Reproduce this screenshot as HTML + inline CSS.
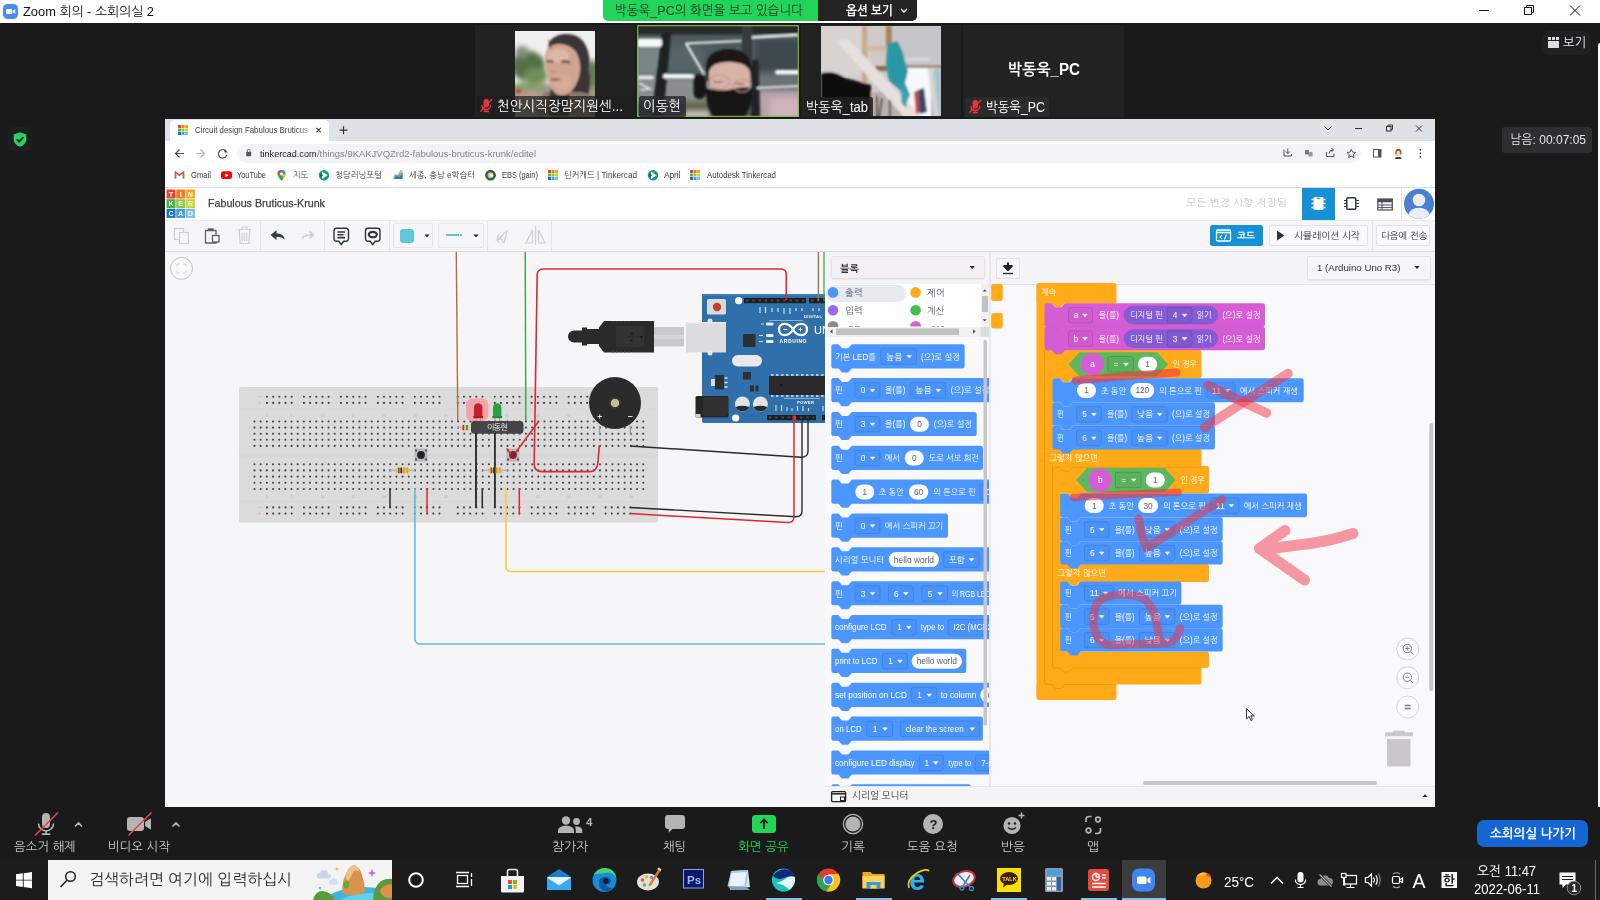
<!DOCTYPE html>
<html lang="ko"><head>
<meta charset="utf-8">
<title>Zoom 회의 - 소회의실 2</title>
<style>
*{box-sizing:border-box;margin:0;padding:0}
html,body{width:1600px;height:900px;overflow:hidden;background:#1a1a1a}
body{font-family:"Liberation Sans","NanumGothic","Noto Sans CJK KR",sans-serif;font-size:12px;color:#fff;position:relative}
.a{position:absolute}
.t{position:absolute;white-space:nowrap;line-height:1}
svg{position:absolute;overflow:visible}
#titlebar{left:0;top:0;width:1600px;height:23px;background:#fff}
#banner{left:603px;top:0;width:215px;height:21px;background:#23d45a;border-radius:0 0 0 5px}
#opts{left:818px;top:0;width:99px;height:21px;background:#242424;border-radius:0 0 5px 0}
#share{left:165px;top:119px;width:1270px;height:688px;background:#f6f6f8;overflow:hidden}
#zbar{left:0;top:807px;width:1600px;height:52px;background:#1a1a1a}
#taskbar{left:0;top:859px;width:1600px;height:41px;background:#1c1c1c}
.zl{position:absolute;white-space:nowrap;line-height:1;font-size:12.5px;color:#c8c8c8;top:841px}
.lab{position:absolute;background:rgba(30,30,30,.7);height:21px;border-radius:2px}
.lab span{position:absolute;white-space:nowrap;line-height:1;font-size:14px;color:#fff;top:3px}

#sh{position:absolute;left:-165px;top:-119px;width:1600px;height:900px;font-size:9px;color:#333;filter:blur(.35px)}
.bm{position:absolute;white-space:nowrap;line-height:1;font-size:8.600px;color:#3c4043;top:171px}
</style>
</head>
<body>
<div id="root" style="position:absolute;left:0;top:0;width:1600px;height:900px;will-change:transform">
<!-- TITLEBAR -->
<div id="titlebar" class="a">
  <svg style="left:3px;top:4px" width="15" height="15" viewBox="0 0 15 15"><rect x="0" y="0" width="15" height="15" rx="4.5" fill="#4a8cf7"></rect><rect x="3" y="5" width="6.2" height="5" rx="1.3" fill="#fff"></rect><path d="M9.8 6.8 L12.2 5.3 V9.7 L9.8 8.2Z" fill="#fff"></path></svg>
  <span class="t" style="left: 23px; top: 5px; font-size: 13px; color: rgb(17, 17, 17); transform-origin: left top; transform: scaleX(0.988);">Zoom 회의 - 소회의실 2</span>
  <svg style="left:1478px;top:4px" width="110" height="14" viewBox="0 0 110 14" fill="none" stroke="#111" stroke-width="1"><path d="M1 6.5H11"></path><path d="M46.5 3.5h7v7h-7z"></path><path d="M48.5 3.5v-2h7v7h-2"></path><path d="M92 1.5l10 10M102 1.5l-10 10"></path></svg>
</div>
<div id="banner" class="a"><span class="t" style="left: 12px; top: 3.5px; font-size: 13.5px; color: rgb(28, 58, 36); transform-origin: left top; transform: scaleX(0.928);">박동욱_PC의 화면을 보고 있습니다</span></div>
<div id="opts" class="a"><span class="t" style="left: 28px; top: 4px; font-size: 13px; font-weight: bold; color: rgb(255, 255, 255); transform-origin: left top; transform: scaleX(0.895);">옵션 보기</span>
  <svg style="left:82px;top:8px" width="8" height="6" viewBox="0 0 8 6" fill="none" stroke="#fff" stroke-width="1.4"><path d="M1 1l3 3 3-3"></path></svg></div>

<!-- right side -->
<div class="a" style="left:1598px;top:43px;width:2px;height:773px;background:#fff;border-radius:2px 0 0 0"></div>
<div class="a" style="left:1542px;top:31px;width:49px;height:24px;background:#202022;border-radius:8px">
  <svg style="left:6px;top:6px" width="11" height="11" viewBox="0 0 11 11"><rect x="0" y="0" width="3" height="3" fill="#ddd"></rect><rect x="4" y="0" width="3" height="3" fill="#ddd"></rect><rect x="8" y="0" width="3" height="3" fill="#ddd"></rect><rect x="0" y="4" width="11" height="7" fill="#ddd"></rect></svg>
  <span class="t" style="left: 21px; top: 5px; font-size: 13px; color: rgb(238, 238, 238); transform-origin: left top; transform: scaleX(0.941);">보기</span>
</div>
<div class="a" style="left:1502px;top:127px;width:90px;height:26px;background:#2e2e30;border-radius:3px">
  <span class="t" style="left: 8px; top: 6px; font-size: 13px; color: rgb(230, 230, 230); transform-origin: left top; transform: scaleX(0.924);">남음: 00:07:05</span>
</div>
<!-- shield -->
<div class="a" style="left:8px;top:127px;width:24px;height:24px;background:#1f1f1f;border-radius:6px">
  <svg style="left:5px;top:5px" width="14" height="15" viewBox="0 0 14 15"><path d="M7 0.3 L13.3 2.6 V7 C13.3 11 10.5 13.6 7 14.8 C3.5 13.6 0.7 11 0.7 7 V2.6Z" fill="#25d366"></path><path d="M3.8 7.3 L6.2 9.7 L10.4 5.2" fill="none" stroke="#1a1a1a" stroke-width="1.7"></path></svg>
</div>

<!-- THUMBS -->
<div id="thumbs">
<svg style="left:0;top:0" width="0" height="0"><defs>
 <filter id="b1" x="-20%" y="-20%" width="140%" height="140%"><feGaussianBlur stdDeviation="1.200"></feGaussianBlur></filter>
 <filter id="b2" x="-20%" y="-20%" width="140%" height="140%"><feGaussianBlur stdDeviation="2.500"></feGaussianBlur></filter>
 <filter id="b05" x="-20%" y="-20%" width="140%" height="140%"><feGaussianBlur stdDeviation="0.600"></feGaussianBlur></filter>
</defs></svg>
<div class="a" id="th1" style="left:475px;top:25px;width:160px;height:92px;background:#222;overflow:hidden">
 <svg style="left:40px;top:6px;overflow:hidden" width="80" height="86" viewBox="515 31 80 86">
  <rect x="515" y="31" width="80" height="86" fill="#eff0ef"></rect>
  <g filter="url(#b2)">
   <ellipse cx="528" cy="66" rx="17" ry="15" fill="#52704a"></ellipse>
   <ellipse cx="522" cy="52" rx="7" ry="6" fill="#7d927a"></ellipse>
   <ellipse cx="536" cy="76" rx="12" ry="8" fill="#6f8f5a"></ellipse>
   <rect x="510" y="84" width="90" height="36" fill="#98987e"></rect>
   <ellipse cx="528" cy="86" rx="16" ry="4" fill="#82a068"></ellipse>
   <ellipse cx="593" cy="74" rx="7" ry="14" fill="#5f7d4e"></ellipse>
   <ellipse cx="530" cy="96" rx="14" ry="5" fill="#b89c94"></ellipse>
  </g>
  <g filter="url(#b1)">
   <path d="M548 52q-1-16 16-18q16-1 22 12q5 10 3 24q3 12-2 30h-16l2-26z" fill="#3b3438"></path>
   <path d="M546 92q-6 4-10 24h64v-14q-8-8-20-10z" fill="#8e7a72"></path>
   <path d="M552 88q-5 8-3 28h20v-26z" fill="#3a3034"></path>
   <path d="M545 60q-1-14 12-16q12-1 19 8q5 8 4 20q-2 14-12 22q-8 4-14-2q-8-10-9-32z" fill="#cfa692"></path>
   <ellipse cx="558" cy="56" rx="11" ry="7" fill="#dcb8a6"></ellipse>
   <ellipse cx="562" cy="82" rx="9" ry="8" fill="#d4ac98"></ellipse>
   <path d="M546.500 62q3.500-2 7 0M561 62.500q4.500-2.500 9 .5" stroke="#4a3830" stroke-width="2" fill="none"></path>
   <ellipse cx="555.500" cy="79.500" rx="5" ry="1.700" fill="#a86862"></ellipse>
   <path d="M551 71q2 2 5 1" stroke="#b08878" stroke-width="1.200" fill="none"></path>
   <ellipse cx="518.500" cy="91" rx="2.500" ry="2.500" fill="#c8483e"></ellipse>
   <path d="M549 40l2 8" stroke="#4a4040" stroke-width="1.200"></path>
  </g>
 </svg>
 <div class="lab" style="left:1px;top:71px;width:158px"><span style="left: 21px; transform-origin: left top; transform: scaleX(0.968);">천안시직장맘지원센...</span></div>
 <svg style="left:4px;top:73px" width="14" height="15" viewBox="0 0 14 15"><rect x="4.500" y="1" width="5.500" height="8.500" rx="2.700" fill="#e0383e"></rect><path d="M2.800 7 a4.500 4.500 0 0 0 9 0 M7.200 11.500v2 M4.500 13.500h5.500" fill="none" stroke="#e0383e" stroke-width="1.300"></path><path d="M1.500 13.500 L13 1" stroke="#e0383e" stroke-width="1.300"></path></svg>
</div>
<div class="a" id="th2" style="left:637px;top:25px;width:162px;height:92px;background:#525c5f;overflow:hidden">
 <svg style="left:0;top:0;overflow:hidden" width="162" height="92" viewBox="637 25 162 92">
  <rect x="637" y="25" width="162" height="92" fill="#4d5a5e"></rect>
  <g filter="url(#b2)">
   <rect x="632" y="44" width="30" height="32" fill="#7a8588"></rect>
   <rect x="668" y="46" width="36" height="26" fill="#566468"></rect>
   <rect x="632" y="78" width="78" height="24" fill="#8a8e8e"></rect>
   <rect x="756" y="40" width="48" height="30" fill="#3e4a4e"></rect>
   <rect x="756" y="74" width="48" height="14" fill="#6a7276"></rect>
   <rect x="758" y="90" width="46" height="30" fill="#b9a2aa"></rect>
   <rect x="770" y="98" width="34" height="22" fill="#ceb2bc"></rect>
   <rect x="684" y="101" width="24" height="9" fill="#696746"></rect>
   <rect x="684" y="111" width="26" height="8" fill="#c8c4c0"></rect>
  </g>
  <g filter="url(#b1)">
   <rect x="637" y="25" width="162" height="9.500" fill="#272b2c"></rect>
   <path d="M662 33h9l-8 86h-12z" fill="#1c2021"></path>
   <rect x="742" y="25" width="10" height="36" fill="#363a3c"></rect>
   <path d="M752 60h6.500l1.500 58h-9z" fill="#202425"></path>
   <rect x="637" y="38.500" width="25" height="8.500" rx="3" fill="#f6f8f8"></rect>
   <path d="M685.500 43.500L741 41" stroke="#eef2f2" stroke-width="2.200" fill="none"></path>
   <path d="M752 37.500L798 35" stroke="#eef2f2" stroke-width="2.600" fill="none"></path>
   <path d="M686 43.500L704 74" stroke="#f2f6f6" stroke-width="2.200" fill="none"></path>
   <rect x="663" y="74" width="31" height="4.500" rx="2.200" fill="#f4f8f8"></rect>
   <rect x="637" y="75.500" width="17" height="4" rx="2" fill="#e4eaea"></rect>
   <rect x="775" y="70" width="25" height="4.500" rx="2.200" fill="#f4f8f8"></rect>
   <path d="M757 88L799 86" stroke="#e2e8e8" stroke-width="2" fill="none"></path>
   <path d="M639 83l11 6-10 1" stroke="#eaf0f0" stroke-width="1.500" fill="none"></path>
   <path d="M706 70q-1-20 22-21q22 0 24 20l-1 12h-44z" fill="#1b1919"></path>
   <path d="M709 72q2-10 20-10q18 0 21 10l1 16q-20 6-42 0z" fill="#d8b2a6"></path>
   <rect x="693.500" y="74" width="12.500" height="25" rx="6" fill="#131313"></rect>
   <path d="M706 88q10 4 22 2q14-4 24-2q2 16-8 30h-30q-9-12-8-30z" fill="#161616"></path>
   <ellipse cx="719.500" cy="82" rx="10" ry="7" fill="none" stroke="#c09888" stroke-width="1.100"></ellipse>
   <ellipse cx="742" cy="85.500" rx="8.500" ry="6.500" fill="none" stroke="#c09888" stroke-width="1.100"></ellipse>
   <path d="M713 81.500q5 1.500 10 0M735 83q5 1.500 9 .5" stroke="#6a4a40" stroke-width="1.100" fill="none"></path>
  </g>
  <rect x="637.700" y="25.700" width="160.600" height="90.600" fill="none" stroke="#88ba3c" stroke-width="1.100"></rect>
 </svg>
 <div class="lab" style="left:2px;top:71px;width:47px;background:rgba(40,40,44,.8)"><span style="left: 4px; transform-origin: left top; transform: scaleX(0.962);">이동현</span></div>
</div>
<div class="a" id="th3" style="left:801px;top:25px;width:160px;height:92px;background:#222;overflow:hidden">
 <svg style="left:20px;top:1px;overflow:hidden" width="120" height="90" viewBox="821 26 120 90">
  <rect x="821" y="26" width="120" height="90" fill="#cfc9c8"></rect>
  <g filter="url(#b1)">
   <rect x="890" y="26" width="52" height="44" fill="#c6c6ca"></rect>
   <rect x="821" y="26" width="45" height="50" fill="#d8d2d0"></rect>
   <rect x="900" y="68" width="34" height="50" fill="#f6f8fa"></rect>
   <rect x="931" y="70" width="11" height="48" fill="#a9c3cc"></rect>
   <path d="M928 68 h5 l6 50 h-5z" fill="#d8d4d0"></path>
   <rect x="896" y="58" width="34" height="3" fill="#d8d8d8"></rect>
   <rect x="896" y="65" width="46" height="3" fill="#a08a78"></rect>
   <rect x="862" y="26" width="5" height="60" fill="#c8aa88"></rect>
   <rect x="886" y="26" width="6" height="22" fill="#a88450"></rect>
   <rect x="866" y="46" width="24" height="5" fill="#d4b8a0"></rect>
   <rect x="875" y="66" width="14" height="5" fill="#8a6a58"></rect>
   <rect x="871" y="92" width="32" height="26" fill="#b9b0ae"></rect>
   <path d="M836 41l12-2 76 80h-18z" fill="#e6e0de"></path>
   <path d="M887 44l10-3q6 8 8 20l3 10-3 12 5 12-3 6-8-12-10-8-3-16z" fill="#2a97a6"></path>
   <path d="M902 84l6 12-2 12-5-6z" fill="#38a6b4"></path>
   <path d="M821 73q14-3 24 5l26 7v33h-50z" fill="#070707"></path>
   <path d="M877 96v22M882 98l-3 20M890 100v18" stroke="#2a2424" stroke-width="1.600" fill="none"></path>
   <path d="M914 92l4-2 3 22-5 2z" fill="#c04858"></path>
   <path d="M918 90l6-2 3 24-7 2z" fill="#3a4868"></path>
  </g>
 </svg>
 <div class="lab" style="left:0;top:72px;width:72px;background:rgba(34,34,34,.86)"><span style="left: 5px; transform-origin: left top; transform: scaleX(0.929);">박동욱_tab</span></div>
</div>
<div class="a" id="th4" style="left:963px;top:25px;width:161px;height:92px;background:#222;overflow:hidden">
 <span class="t" style="left: 45px; top: 37px; font-size: 16px; font-weight: bold; color: rgb(255, 255, 255); transform-origin: left top; transform: scaleX(0.944);">박동욱_PC</span>
 <div class="lab" style="left:2px;top:72px;width:84px;background:#2b2b2b"><span style="left: 21px; transform-origin: left top; transform: scaleX(0.884);">박동욱_PC</span></div>
 <svg style="left:5px;top:74px" width="14" height="15" viewBox="0 0 14 15"><rect x="4.500" y="1" width="5.500" height="8.500" rx="2.700" fill="#e0383e"></rect><path d="M2.800 7 a4.500 4.500 0 0 0 9 0 M7.200 11.500v2 M4.500 13.500h5.500" fill="none" stroke="#e0383e" stroke-width="1.300"></path><path d="M1.500 13.500 L13 1" stroke="#e0383e" stroke-width="1.300"></path></svg>
</div>
</div>

<!-- SHARED SCREEN -->
<div id="share" class="a"><div id="sh">
<!-- chrome tab strip -->
<div class="a" style="left:165px;top:119px;width:1270px;height:23px;background:#dee1e6"></div>
<div class="a" style="left:170px;top:120px;width:159px;height:22px;background:#fff;border-radius:5px 5px 0 0"></div>
<div class="a" style="left:165px;top:141px;width:1270px;height:46px;background:#fff"></div>
<div class="a" style="left:237px;top:144px;width:1124px;height:19px;background:#f1f3f4;border-radius:10px"></div>
<div class="a" style="left:165px;top:187px;width:1270px;height:1px;background:#dcdcdc"></div>
<svg style="left:165px;top:119px" width="1270" height="70" viewBox="165 119 1270 70" font-family="Liberation Sans, sans-serif">
 <!-- favicon -->
 <g id="tkfav"><rect x="178" y="125" width="3" height="3" fill="#e8452c"></rect><rect x="181.500" y="125" width="3" height="3" fill="#f47b20"></rect><rect x="185" y="125" width="3" height="3" fill="#f8a51b"></rect><rect x="178" y="128.500" width="3" height="3" fill="#4cb848"></rect><rect x="181.500" y="128.500" width="3" height="3" fill="#8dc63f"></rect><rect x="185" y="128.500" width="3" height="3" fill="#c6d92e"></rect><rect x="178" y="132" width="3" height="3" fill="#1c75bc"></rect><rect x="181.500" y="132" width="3" height="3" fill="#42a5e0"></rect><rect x="185" y="132" width="3" height="3" fill="#7ac0e8"></rect></g>
 <use href="#tkfav" x="370" y="45"></use>
 <use href="#tkfav" x="512" y="45"></use>
 <path d="M316.300 127.800l4.600 4.600M320.900 127.800l-4.600 4.600" stroke="#444" stroke-width="1.100"></path>
 <path d="M339.500 130.200h8M343.500 126.200v8" stroke="#333" stroke-width="1.200"></path>
 <!-- window controls -->
 <g fill="none" stroke="#333" stroke-width="1"><path d="M1324.500 126.500l3.500 3.500 3.500-3.500"></path><path d="M1355 128.500h7"></path><rect x="1386.500" y="126.500" width="4.500" height="4.500"></rect><path d="M1388 126.500v-1.500h4.500v4.500h-1.500"></path><path d="M1416 125.500l6 6M1422 125.500l-6 6"></path></g>
 <!-- nav -->
 <g fill="none" stroke="#4a4a4a" stroke-width="1.200"><path d="M184 153.500h-8.500M179.500 149.500l-4 4 4 4"></path><path d="M226.300 151.500a4.300 4.300 0 1 0 .5 3.500"></path></g>
 <path d="M224.500 149v3.500h3.500z" fill="#4a4a4a" transform="rotate(8 226 151)"></path>
 <g fill="none" stroke="#b8b8b8" stroke-width="1.200"><path d="M196 153.500h8.500M200.500 149.500l4 4-4 4"></path></g>
 <rect x="246.200" y="152" width="5" height="4.200" rx=".6" fill="#555"></rect><path d="M247.300 152v-1.300a1.400 1.400 0 0 1 2.800 0v1.300" fill="none" stroke="#555" stroke-width=".9"></path>
 <!-- omnibox right icons -->
 <g fill="none" stroke="#555" stroke-width="1"><path d="M1284 149.500v6.500h7.500v-2M1287.800 148.500v5M1285.800 151.500l2 2 2-2"></path><rect x="1305" y="150" width="4" height="4.500" fill="#777" stroke="none"></rect><rect x="1308.500" y="152" width="4" height="4.500" fill="#999" stroke="none"></rect><path d="M1326.500 152v4.500h7.500v-3M1329 153.500q.5-3.500 4-3.500M1331.500 148l2 2-2 2"></path><path d="M1351.300 149.300l1.300 2.800 3 .4-2.200 2.100.6 3-2.700-1.500-2.700 1.500.6-3-2.200-2.100 3-.4z"></path><rect x="1373.500" y="149.500" width="7.500" height="7.500"></rect></g>
 <rect x="1378" y="149.500" width="3" height="7.500" fill="#555"></rect>
 <circle cx="1398.300" cy="152.500" r="3.600" fill="#f5d0b0"></circle><path d="M1395.500 151q3-4.500 5.800 0v3.500h-1v-3q-1.900-1.500-3.800 0v3h-1z" fill="#7a4a2a"></path><path d="M1395.800 157h5l.8 2h-6.600z" fill="#333"></path><circle cx="1398.300" cy="152.500" r="5.200" fill="none" stroke="#f7c9a0" stroke-width=".6" stroke-dasharray="1 1.500"></circle>
 <circle cx="1420.300" cy="149.800" r=".9" fill="#444"></circle><circle cx="1420.300" cy="153.300" r=".9" fill="#444"></circle><circle cx="1420.300" cy="156.800" r=".9" fill="#444"></circle>
 <!-- bookmark icons -->
 <path d="M175.500 178.500v-6.500l4 3.200 4-3.200v6.500" fill="none" stroke="#e84a3c" stroke-width="1.500"></path><path d="M175.500 178.500v-5" stroke="#4a86e8" stroke-width="1.500"></path><path d="M183.500 178.500v-5" stroke="#3aa757" stroke-width="1.500"></path>
 <rect x="221" y="171.300" width="11" height="7.700" rx="2.200" fill="#f00"></rect><path d="M225.300 173.200l3.400 2-3.400 2z" fill="#fff"></path>
 <path d="M281.500 181q-4-4.500-4-7a4 4 0 0 1 8 0q0 2.500-4 7z" fill="#34a853"></path><path d="M277.500 174a4 4 0 0 1 4-4v4z" fill="#ea4335"></path><path d="M281.500 170a4 4 0 0 1 4 4h-4z" fill="#4285f4"></path><path d="M281.500 174h4q0 2-2 4.500z" fill="#fbbc04"></path><circle cx="281.500" cy="174" r="1.400" fill="#fff"></circle>
 <g id="cdi"><circle cx="324" cy="175.200" r="5.200" fill="#1a9a8a"></circle><path d="M322 171.500l5.500 3.700-5.500 3.700z" fill="#fff"></path><path d="M320 173.500l3.500 1.700-3.500 1.700z" fill="#0e6a5e"></path></g>
 <use href="#cdi" x="329" y="0"></use>
 <path d="M393 179l2-5 3 1 2-4 3 2v6z" fill="#6aa8c8"></path><path d="M395 179l1-3 3 1 3-2v4z" fill="#2a7a9a"></path><circle cx="401" cy="171.500" r="1.500" fill="#f0c040"></circle>
 <circle cx="490.500" cy="175.200" r="5.400" fill="#1a5a7a"></circle><circle cx="490.500" cy="175.200" r="3" fill="#f2c230"></circle><circle cx="491.500" cy="175.200" r="1.500" fill="#fff"></circle>
</svg>
<span class="t" style="left: 194.5px; top: 125.5px; font-size: 8.7px; color: rgb(60, 64, 67); transform-origin: left top; transform: scaleX(0.907);">Circuit design Fabulous Bruticus</span>
<div class="a" style="left:300px;top:122px;width:12px;height:18px;background:linear-gradient(90deg,rgba(255,255,255,0),#fff)"></div>
<span class="t" style="left: 259.5px; top: 149.7px; font-size: 8.8px; color: rgb(32, 33, 36); transform-origin: left top; transform: scaleX(1.032);">tinkercad.com</span>
<span class="t" style="left: 316.5px; top: 149.7px; font-size: 8.8px; color: rgb(128, 134, 139); transform-origin: left top; transform: scaleX(1.074);">/things/9KAKJVQZrd2-fabulous-bruticus-krunk/editel</span>
<span class="bm" style="left: 190.5px; transform-origin: left top; transform: scaleX(0.891);">Gmail</span>
<span class="bm" style="left: 237px; transform-origin: left top; transform: scaleX(0.858);">YouTube</span>
<span class="bm" style="left: 292.5px; transform-origin: left top; transform: scaleX(0.928);">지도</span>
<span class="bm" style="left: 335px; transform-origin: left top; transform: scaleX(0.969);">청담러닝포털</span>
<span class="bm" style="left: 408.5px; transform-origin: left top; transform: scaleX(0.964);">세종, 충남 e학습터</span>
<span class="bm" style="left: 501.5px; transform-origin: left top; transform: scaleX(0.866);">EBS (gain)</span>
<span class="bm" style="left: 564px; transform-origin: left top; transform: scaleX(0.951);">틴커캐드 | Tinkercad</span>
<span class="bm" style="left: 664px; transform-origin: left top; transform: scaleX(0.959);">April</span>
<span class="bm" style="left: 706.5px; transform-origin: left top; transform: scaleX(0.914);">Autodesk Tinkercad</span>
<!-- tinkercad header -->
<div class="a" style="left:165px;top:188px;width:1270px;height:32px;background:#fff"></div>
<div class="a" style="left:165px;top:220px;width:1270px;height:32px;background:#f6f6f8;border-top:1px solid #ececee;border-bottom:1px solid #dcdce0"></div>
<div class="a" style="left:1302px;top:188px;width:33px;height:32px;background:#1592d6"></div>
<div class="a" style="left:1401px;top:189px;width:1px;height:30px;background:#e4e4e4"></div>
<div class="a" style="left:1210px;top:225px;width:53px;height:21px;background:#1592d6;border-radius:2.500px"></div>
<div class="a" style="left:1269px;top:225px;width:99px;height:21px;background:#f9f9fb;border:1px solid #e3e3e6;border-radius:2px"></div>
<div class="a" style="left:1376px;top:225px;width:54px;height:21px;background:#f9f9fb;border:1px solid #e3e3e6;border-radius:2px"></div>
<div class="a" style="left:393px;top:223px;width:40px;height:25px;border:1px solid #e6e6e9;border-radius:2px"></div>
<div class="a" style="left:438px;top:223px;width:46px;height:25px;border:1px solid #e6e6e9;border-radius:2px"></div>
<div class="a" style="left:400px;top:229px;width:14px;height:14px;background:#5ec8d8;border-radius:3px"></div>
<div class="a" style="left:446px;top:234px;width:13px;height:2px;background:#5ec8d8"></div><div class="a" style="left:460px;top:234px;width:2px;height:2px;background:#5ec8d8"></div>
<svg style="left:165px;top:188px" width="1270" height="64" viewBox="165 188 1270 64" font-family="Liberation Sans, sans-serif">
 <!-- logo -->
 <g font-size="7.200" font-weight="bold" fill="#fff" text-anchor="middle">
  <rect x="166.500" y="189.500" width="9" height="9" fill="#e8452c"></rect><rect x="176.200" y="189.500" width="9" height="9" fill="#f47b20"></rect><rect x="185.900" y="189.500" width="9" height="9" fill="#f9a21a"></rect>
  <rect x="166.500" y="199.200" width="9" height="9" fill="#44b549"></rect><rect x="176.200" y="199.200" width="9" height="9" fill="#8cc63f"></rect><rect x="185.900" y="199.200" width="9" height="9" fill="#c4d82e"></rect>
  <rect x="166.500" y="208.900" width="9" height="9" fill="#1b75bb"></rect><rect x="176.200" y="208.900" width="9" height="9" fill="#3fa2df"></rect><rect x="185.900" y="208.900" width="9" height="9" fill="#7bbfe8"></rect>
  <text x="171" y="196.600">T</text><text x="180.700" y="196.600">I</text><text x="190.400" y="196.600">N</text>
  <text x="171" y="206.300">K</text><text x="180.700" y="206.300">E</text><text x="190.400" y="206.300">R</text>
  <text x="171" y="216">C</text><text x="180.700" y="216">A</text><text x="190.400" y="216">D</text>
 </g>
 <!-- header right icons -->
 <rect x="1313.500" y="197" width="10" height="13" rx="1.500" fill="#fff"></rect><path d="M1311.500 199.500h2M1311.500 203.500h2M1311.500 207.500h2M1323.500 199.500h2M1323.500 203.500h2M1323.500 207.500h2" stroke="#fff" stroke-width="1.300"></path><rect x="1317" y="197.800" width="3" height="1.200" fill="#1592d6"></rect>
 <rect x="1346.800" y="197.800" width="9" height="11.500" rx="1" fill="none" stroke="#2d3540" stroke-width="1.500"></rect><path d="M1344 200.500h2.500M1344 203.500h2.500M1344 206.500h2.500M1356.500 200.500h2.500M1356.500 203.500h2.500M1356.500 206.500h2.500" stroke="#2d3540" stroke-width="1.200"></path>
 <rect x="1377.800" y="199" width="14.500" height="11" fill="none" stroke="#4a4f58" stroke-width="1.200"></rect><rect x="1377.800" y="199" width="14.500" height="3.300" fill="#4a4f58"></rect><path d="M1377.800 205h14.500M1377.800 207.600h14.500M1382 202v8" stroke="#4a4f58" stroke-width="1"></path>
 <circle cx="1419" cy="203.800" r="15" fill="#4a80d4"></circle><circle cx="1419" cy="200" r="6.300" fill="#e9edf6"></circle><path d="M1408.500 214.500q2-6.800 10.500-6.800t10.500 6.800q-4.500 4.300-10.500 4.300t-10.500-4.300z" fill="#e9edf6"></path>
 <!-- toolbar icons -->
 <g fill="none" stroke="#cfcfd4" stroke-width="1.200"><rect x="174.500" y="228.500" width="9" height="11"></rect><rect x="179.500" y="232.500" width="9" height="11" fill="#f6f6f8"></rect>
  <path d="M237.800 229.500h13.400M239.300 229.500l.7 14h9l.7-14M242 229v-2h5v2M242.300 232.500v8.500M244.500 232.500v8.500M246.700 232.500v8.500"></path>
  <path d="M302 238q4-3.500 11-3M309.500 231.500l4 3.500-4 3.500" stroke-width="1.800"></path>
  <path d="M497 240l10-9-3 12-2.500-4z"></path><path d="M499 234q-3 4 0 9"></path>
  <path d="M535.500 226v19M532.500 230v13h-6.500zM538.500 230v13h6.500z"></path>
 </g>
 <g fill="none" stroke="#5a5f68" stroke-width="1.300"><path d="M205.500 230.500h10.500v12.500h-10.500zM208.500 230.500v-1.500h4.500v1.500"></path><rect x="212.500" y="235.500" width="6.500" height="6.500" fill="#f6f6f8"></rect></g>
 <path d="M270.500 235l6-4.800v3q6.500 0 8.500 6.300q-3.500-3-8.500-2.600v3z" fill="#2c3e50"></path>
 <g fill="none" stroke="#2d3540" stroke-width="1.400"><path d="M336.500 228.300h9.500a2.500 2.500 0 0 1 2.500 2.500v8a2.500 2.500 0 0 1-2.500 2.500h-2.300l-2.500 3.200-2.500-3.200h-2.200a2.500 2.500 0 0 1-2.500-2.500v-8a2.500 2.500 0 0 1 2.500-2.500z"></path><path d="M337.500 232h7.500M337.500 234.800h6M337.500 237.600h7.500" stroke-width="1.600"></path>
  <path d="M368 228.300h9.500a2.500 2.500 0 0 1 2.500 2.500v8a2.500 2.500 0 0 1-2.500 2.500h-2.300l-2.500 3.200-2.500-3.200h-2.200a2.500 2.500 0 0 1-2.500-2.500v-8a2.500 2.500 0 0 1 2.500-2.500z"></path><ellipse cx="372.800" cy="234.600" rx="4" ry="2.700" stroke-width="2.100"></ellipse></g>
 <path d="M424.500 234.500h5l-2.500 2.800zM473.500 234.500h5l-2.500 2.800z" fill="#222"></path>
 <path d="M260.500 221v30M324.500 221v30M389.500 221v30M487.500 221v30M551.500 221v30M1372.500 221v30" stroke="#e6e6e9" stroke-width="1"></path>
 <!-- code btn icon -->
 <rect x="1216.500" y="230" width="14" height="11" rx="1" fill="none" stroke="#fff" stroke-width="1.300"></rect><path d="M1216.500 232.500h14" stroke="#fff" stroke-width="1.600"></path><path d="M1222 235l-2 2 2 2M1226.500 234.500l-2 5" stroke="#fff" stroke-width="1.200" fill="none"></path>
 <path d="M1277 230.500l7.500 5-7.500 5z" fill="#2d3540"></path>
</svg>
<span class="t" style="left: 208px; top: 197.5px; font-size: 11px; color: rgb(58, 63, 72); -webkit-text-stroke: 0.25px rgb(58, 63, 72); transform-origin: left top; transform: scaleX(0.971);">Fabulous Bruticus-Krunk</span>
<span class="t" style="left: 1185.5px; top: 198px; font-size: 9.8px; color: rgb(201, 201, 204); transform-origin: left top; transform: scaleX(1.109);">모든 변경 사항 저장됨</span>
<span class="t" style="left: 1237px; top: 231px; font-size: 9.5px; color: rgb(255, 255, 255); font-weight: bold; transform-origin: left top; transform: scaleX(1.007);">코드</span>
<span class="t" style="left: 1294px; top: 231px; font-size: 9.5px; color: rgb(51, 51, 51); transform-origin: left top; transform: scaleX(1.013);">시뮬레이션 시작</span>
<span class="t" style="left: 1380.5px; top: 231px; font-size: 9.5px; color: rgb(51, 51, 51); transform-origin: left top; transform: scaleX(0.983);">다음에 전송</span>
<!-- canvas -->
<div class="a" style="left:165px;top:252px;width:660px;height:555px;background:#f6f6f8"></div>
<svg style="left:165px;top:252px;overflow:hidden" width="660" height="555" viewBox="165 252 660 555" font-family="Liberation Sans, sans-serif">
 <circle cx="181.500" cy="268.400" r="11" fill="#f9f9fa" stroke="#c2c2c6" stroke-width="1"></circle>
 <path d="M177 266.500v-2.500h2.500M186 266.500v-2.500h-2.500M177 270.500v2.500h2.500M186 270.500v2.500h-2.500" fill="none" stroke="#d0d0d4" stroke-width="1"></path>
 <!-- breadboard -->
 <rect x="239" y="387" width="419" height="135.500" rx="2" fill="#dbdbdc"></rect>
 <rect x="239" y="408.500" width="419" height="1" fill="#d7d7d8"></rect><rect x="239" y="501" width="419" height="1" fill="#d7d7d8"></rect>
 <rect x="239" y="453" width="419" height="4.500" fill="#d8d8d9"></rect>
 <path d="M254.500 421.5h390 M254.500 427.6h390 M254.500 433.7h390 M254.500 439.8h390 M254.500 445.9h390 M254.500 464.2h390 M254.500 470.4h390 M254.500 476.6h390 M254.500 482.8h390 M254.500 489.0h390 " stroke="#454545" stroke-width="2.100" stroke-linecap="round" stroke-dasharray="0.010 6.160" fill="none"></path>
 <path d="M267 396.7h178M457.800 396.7h178 M267 402.9h178M457.800 402.9h178 M267 507.4h178M457.800 507.4h178 M267 513.6h178M457.800 513.6h178 " stroke="#454545" stroke-width="2.100" stroke-linecap="round" stroke-dasharray="0.010 6.160 0.010 6.160 0.010 6.160 0.010 6.160 0.010 12.260" fill="none"></path>
 <g font-size="3.500" fill="#b4b4b6" text-anchor="middle">
  <text x="267" y="417">1</text><text x="291.500" y="417">5</text><text x="322.500" y="417">10</text><text x="353.500" y="417">15</text><text x="384" y="417">20</text><text x="415" y="417">25</text><text x="446" y="417">30</text><text x="507" y="417">40</text><text x="538" y="417">45</text><text x="569" y="417">50</text>
  <text x="267" y="498">1</text><text x="291.500" y="498">5</text><text x="322.500" y="498">10</text><text x="353.500" y="498">15</text><text x="384" y="498">20</text><text x="415" y="498">25</text><text x="446" y="498">30</text><text x="476.500" y="498">35</text><text x="538" y="498">45</text><text x="569" y="498">50</text><text x="600" y="498">55</text><text x="631" y="498">60</text>
 </g>
 <path d="M258 396.700h3M258 507.400h3" stroke="#c8c8ca" stroke-width="1"></path><path d="M258 402.900h3M259.500 401.400v3M258 513.600h3M259.500 512.100v3" stroke="#e8b8c0" stroke-width="1"></path>
 <!-- arduino -->
 <g>
  <rect x="654" y="327" width="30" height="19.500" fill="#c9c9cb"></rect><rect x="654" y="335" width="30" height="4" fill="#d6d6d8"></rect>
  <path d="M599 327.500l5-6.500h50v31.500h-50l-5-6.500z" fill="#2b2b2b"></path><rect x="616" y="326" width="28" height="21" fill="#333"></rect>
  <path d="M612 321.700h20M612 351.800h20" stroke="#444" stroke-width="1" stroke-dasharray="2 2"></path>
  <path d="M599 329h-12v-1.500h-5v3h-8a6 6 0 0 0 0 12h8v3h5v-1.500h12z" fill="#2b2b2b"></path>
  <circle cx="632" cy="333.500" r="1" fill="#1a1a1a"></circle><circle cx="641.500" cy="337" r="1.200" fill="#1a1a1a"></circle><rect x="630.500" y="339.500" width="2" height="2" fill="#1a1a1a"></rect><path d="M626 337h15" stroke="#222" stroke-width=".7"></path>
  <rect x="702" y="294" width="126" height="129" rx="2" fill="#2f70aa"></rect>
  <rect x="702" y="294" width="126" height="2" fill="#3b7fba"></rect>
  <rect x="686" y="322" width="40" height="30.500" fill="#dcdcde"></rect><rect x="686" y="322" width="40" height="1.500" fill="#ececee"></rect>
  <circle cx="710" cy="321" r="2.500" fill="#e4e8ee"></circle><circle cx="710" cy="353" r="2.500" fill="#e4e8ee"></circle>
  <rect x="707" y="299" width="19" height="15.500" rx="1.500" fill="#d8dade"></rect><circle cx="717" cy="307" r="4.200" fill="#c04428"></circle>
  <circle cx="738.700" cy="300.700" r="3.600" fill="#fdfdfd"></circle><circle cx="735.700" cy="418" r="3.600" fill="#fdfdfd"></circle>
  <rect x="744" y="298" width="62" height="5.200" fill="#1e1e1e"></rect><rect x="809" y="298" width="20" height="5.200" fill="#1e1e1e"></rect>
  <path d="M746 300.600h58M811 300.600h16" stroke="#4a4a4a" stroke-width="2" stroke-dasharray="2.500 3.700"></path>
  <path d="M760 307v6M765.500 307v6M772 308v4M778 308v4M784 308v6M790 308v6M796 308v3M802 308v3M813 308v3M819 308v3" stroke="#c5d8ea" stroke-width="1.300"></path>
  <text x="804" y="318" font-size="4.300" font-weight="bold" fill="#e8f0f8" textLength="18">DIGITAL</text>
  <path d="M803 320.500h-34" stroke="#c5d8ea" stroke-width=".6"></path>
  <rect x="766" y="322.500" width="7.500" height="3" rx="1" fill="#e6eef6"></rect><rect x="766" y="334" width="7.500" height="3" rx="1" fill="#e6eef6"></rect><rect x="766" y="340" width="7.500" height="3" rx="1" fill="#e6eef6"></rect>
  <path d="M761 324h3M759 335.500h4M759 341.500h4" stroke="#c5d8ea" stroke-width="1"></path>
  <path d="M786 329.500c0-7.500 10-7.500 14 0s14 7.500 14 0s-10-7.500-14 0s-14 7.500-14 0z" transform="translate(-7 0)" fill="none" stroke="#fff" stroke-width="2.300"></path>
  <path d="M783.500 329.500h4M798.500 329.500h4M800.500 327.500v4" stroke="#fff" stroke-width="1"></path>
  <text x="779.500" y="343" font-size="5" font-weight="bold" fill="#fff" textLength="27">ARDUINO</text>
  <text x="814" y="334" font-size="11" fill="#fff">UN</text>
  <rect x="743" y="334" width="12.500" height="13" rx="1" fill="#2c3034"></rect>
  <rect x="732" y="355" width="30" height="11.500" rx="5.700" fill="#e9e9eb"></rect>
  <rect x="743" y="372" width="8" height="7.500" fill="#2c3034"></rect>
  <rect x="715" y="375" width="9" height="14.500" fill="#2c3034"></rect><rect x="711" y="379" width="4" height="7" fill="#d8dade"></rect><path d="M724.500 378h3M724.500 382.500h3M724.500 387h3" stroke="#d8dade" stroke-width="1.500"></path>
  <rect x="750" y="385.500" width="4" height="6" fill="#2c3034"></rect><rect x="755.500" y="385.500" width="3" height="6" fill="#2c3034"></rect>
  <rect x="769" y="376" width="60" height="19" fill="#2a2a2c"></rect><path d="M771 375h58M771 396h58" stroke="#e0e4ea" stroke-width="1.400" stroke-dasharray="2.500 2.500"></path><circle cx="781.500" cy="385" r="1.500" fill="#1a1a1a"></circle>
  <rect x="695.500" y="396" width="33" height="21.500" rx="1.500" fill="#262626"></rect><rect x="703" y="397" width="25" height="19" rx="3" fill="#303030"></rect><rect x="695.500" y="414" width="5" height="3.500" fill="#d0d0d0"></rect>
  <circle cx="742.400" cy="404" r="7.500" fill="#e3e3e5"></circle><path d="M735.600 407a7.500 7.500 0 0 0 13.600 0q-6.800-2.500-13.600 0z" fill="#2a2a2a"></path>
  <circle cx="760.400" cy="404" r="7.500" fill="#e3e3e5"></circle><path d="M753.600 407a7.500 7.500 0 0 0 13.600 0q-6.800-2.500-13.600 0z" fill="#2a2a2a"></path>
  <text x="797" y="403.500" font-size="4.300" font-weight="bold" fill="#e8f0f8" textLength="17">POWER</text><path d="M784 398.500h36" stroke="#c5d8ea" stroke-width=".6"></path>
  <path d="M776 405v6M781.500 405v6M787 407v4M792 408v3M797.500 406v5M803 406v5M808.500 408v3M823 406v5" stroke="#c5d8ea" stroke-width="1.200"></path>
  <rect x="767" y="415" width="49" height="5.200" fill="#1e1e1e"></rect><rect x="822" y="415" width="8" height="5.200" fill="#1e1e1e"></rect>
  <path d="M769 417.600h45" stroke="#4a4a4a" stroke-width="2" stroke-dasharray="2.500 3.700"></path>
 </g>
 <!-- wires -->
 <g fill="none" stroke-width="1.400" stroke-linejoin="round">
  <path d="M456.300 252L457.800 421.500" stroke="#9a7748"></path>
  <path d="M525.200 252L525.800 421.500" stroke="#3ba33f"></path>
  <path d="M818.400 252V301" stroke="#9a7748"></path><path d="M824 252V301" stroke="#3ba33f" stroke-width="1.200"></path>
  <path d="M786.300 300V274a5 5 0 0 0-5-5H542.700a5.500 5.500 0 0 0-5.500 5.500L534.200 464Q534.200 471.600 542 471.600H590Q597 471.600 598 462L599.300 445.500" stroke="#e0262e" stroke-width="1.600"></path>
  
  <path d="M476 433V507.800M494.800 433V507.800M482.300 488.200V507.800M390 488.200V507.800" stroke="#2a2a2a" stroke-width="1.500"></path>
  <path d="M427 488.200V513.600M519.300 488.200V513.600" stroke="#e0262e" stroke-width="1.500"></path>
  <path d="M414.900 488.200V639a5 5 0 0 0 5 5H825" stroke="#63bcd4" stroke-width="1.600"></path>
  <path d="M506 488.200V567a4.500 4.500 0 0 0 4.500 4.500H825" stroke="#ecd032" stroke-width="1.600"></path>
  <path d="M630 446L801 457.200q7 0 7-6V420" stroke="#2a2a2a"></path>
  <path d="M630 507.500L796 516.800q6 0 6-6V420" stroke="#2a2a2a"></path>
  <path d="M630 513.600L788 522.600q6 0 6-6V420" stroke="#e0262e" stroke-width="1.500"></path>
 </g>
 <rect x="792.500" y="415.500" width="3.500" height="4.500" fill="#d83030"></rect>
 <!-- components -->
 <rect x="466" y="398.500" width="22.500" height="22.500" rx="6" fill="#f4a3ab"></rect>
 <path d="M474 417v-9.500a4.200 4.200 0 0 1 8.400 0v9.500z" fill="#c62026"></path><rect x="473.300" y="416" width="9.800" height="2.200" fill="#b01c22"></rect>
 <path d="M493 417v-9.500a4.200 4.200 0 0 1 8.400 0v9.500z" fill="#2f9e41"></path><rect x="492.300" y="416" width="9.800" height="2.200" fill="#278a38"></rect>
 <path d="M476 418v3.500M480.500 418v3.500M495 418v3.500M499.500 418v3.500" stroke="#999" stroke-width="1"></path>
 <path d="M457 427.600h14" stroke="#aaa" stroke-width="1"></path><rect x="461.500" y="425" width="9.500" height="5.200" rx="1" fill="#e6d2a8"></rect><rect x="462.500" y="425" width="1.800" height="5.200" fill="#d8241c"></rect><rect x="466" y="425" width="1.800" height="5.200" fill="#2a9a3c"></rect>
 <rect x="471" y="421" width="52.500" height="12.800" rx="3.500" fill="#454547"></rect>
 <text x="497.200" y="430.300" font-size="8" fill="#fff" text-anchor="middle" font-family="NanumGothic, Noto Sans CJK KR, sans-serif" textLength="21">이동현</text>
 <g><rect x="414.500" y="448.500" width="13" height="13" rx="1" fill="#b9b9bd"></rect><circle cx="421" cy="455" r="3.900" fill="#242424"></circle><path d="M415 449.500h2v2h-2zM425 449.500h2v2h-2zM415 458.500h2v2h-2zM425 458.500h2v2h-2z" fill="#555"></path></g>
 <g><rect x="506.500" y="448.500" width="13" height="13" rx="1" fill="#c3b6ba"></rect><circle cx="513" cy="455" r="3.900" fill="#8c1f28"></circle><path d="M507 449.500h2v2h-2zM517 449.500h2v2h-2zM507 458.500h2v2h-2zM517 458.500h2v2h-2z" fill="#555"></path></g>
 <path d="M538.700 421.300L516 452" stroke="#d8283a" stroke-width="1.600" fill="none"></path><path d="M506.700 448.400l4.500 6" stroke="#d8283a" stroke-width="1.500"></path>
 <g id="res"><path d="M390 470.400h25" stroke="#b0b0b0" stroke-width="1.200"></path><rect x="395.500" y="467.600" width="14" height="5.600" rx="2" fill="#e9c071"></rect><rect x="398" y="467.600" width="1.500" height="5.600" fill="#7a4a1a"></rect><rect x="400.500" y="467.600" width="1.500" height="5.600" fill="#1a1a1a"></rect><rect x="403" y="467.600" width="1.500" height="5.600" fill="#e88a1a"></rect><rect x="406.500" y="467.600" width="1.300" height="5.600" fill="#c8a030"></rect></g>
 <use href="#res" x="92.700" y="0"></use>
 <path d="M476 433V507.800M494.800 433V507.800" stroke="#2a2a2a" stroke-width="1.500"></path>
 <circle cx="615" cy="403" r="26" fill="#2b2b2b"></circle><circle cx="615" cy="403" r="4.300" fill="#c9bd8d"></circle><circle cx="615" cy="403" r="5.200" fill="none" stroke="#3c3c3a" stroke-width="1"></circle>
 <path d="M597.500 416.500h4.500M599.700 414.300v4.500M628 416.500h4.500" stroke="#eee" stroke-width=".9"></path>
 <path d="M599.500 426v8M630.300 426v8" stroke="#9a9a9a" stroke-width="1.200"></path>
 
</svg>
<!--PANEL_START-->
<div class="a" style="left:825px;top:252px;width:610px;height:555px;background:#f9f8fb"></div>
<div class="a" style="left:825px;top:252px;width:610px;height:33px;background:#f4f3f6;border-bottom:1px solid #e2e1e6"></div>

<div class="a" style="left:989px;top:252px;width:1.500px;height:534px;background:#e9e7ec"></div>
<div class="a" style="left:831px;top:256px;width:154px;height:23px;background:#f3f1f5;border:1px solid #e4e2e8;border-radius:2px;box-shadow:0 1px 1px rgba(0,0,0,.05)"></div>
<div class="a" style="left:996px;top:258px;width:24px;height:21px;background:#f6f5f8;border:1px solid #e4e2e8;border-radius:2px"></div>
<div class="a" style="left:1306.500px;top:256px;width:124px;height:23.500px;background:#f6f5f8;border:1px solid #e4e2e8;border-radius:2px;box-shadow:0 1px 1px rgba(0,0,0,.05)"></div>
<!-- categories -->
<div class="a" style="left:826px;top:284px;width:155px;height:43px;background:#fff"></div>
<div class="a" style="left:826px;top:284.500px;width:80px;height:17.500px;background:#e6e9ee;border-radius:9px"></div>
<div class="a" style="left:980.500px;top:284px;width:8.500px;height:52.500px;background:#f1f1f1"></div>
<div class="a" style="left:981.500px;top:296px;width:6.500px;height:15.500px;background:#c1c1c1"></div>
<div class="a" style="left:826px;top:327px;width:154.500px;height:9.500px;background:#f1f1f1"></div>
<div class="a" style="left:836px;top:328.500px;width:123px;height:6.500px;background:#c1c1c1"></div>
<div class="a" style="left:980.500px;top:327px;width:8.500px;height:9.500px;background:#dcdcdc"></div>
<svg style="left:825px;top:252px;overflow:hidden" width="164" height="534" viewBox="825 252 164 534" font-family="Liberation Sans, NanumGothic, Noto Sans CJK KR, sans-serif">
 <circle cx="833" cy="292.400" r="5.300" fill="#4c97ff"></circle><circle cx="915.600" cy="292.400" r="5.300" fill="#ffab19"></circle>
 <circle cx="833" cy="310.300" r="5.300" fill="#9966ff"></circle><circle cx="915.600" cy="310.300" r="5.300" fill="#40bf4a"></circle>
 <circle cx="833" cy="328.500" r="5.300" fill="#8a8a8a" style="clip-path:inset(0 0 0 0)"></circle>
 <rect x="826" y="327" width="163" height="9.500" fill="#f1f1f1"></rect><rect x="836" y="328.500" width="123" height="6.500" fill="#c1c1c1"></rect><rect x="980.500" y="327" width="8.500" height="9.500" fill="#dcdcdc"></rect>
 <path d="M827.500 326.500a5.500 5.500 0 0 1 11 0z" fill="#8a8a8a"></path><path d="M910.100 326.500a5.500 5.500 0 0 1 11 0z" fill="#cf63cf"></path>
 <path d="M849 326.500h4M855 326.500h5M932 326.500h3M937 326.500h2M941 326.500h3" stroke="#8a8fa0" stroke-width=".8"></path>
 <path d="M832.500 329.200v4.600l-2.600-2.300zM973 329.200v4.600l2.600-2.300z" fill="#555"></path>
 <path d="M982.700 291.500h4l-2-2.300zM982.700 319.300h4l-2 2.300z" fill="#555"></path>
 <path d="M969.500 266h5.400l-2.700 3z" fill="#222"></path>
 <path d="M833.5 344.2H837.6q1.2 0 2 1.2l1.2 1.600q.8 1.200 2 1.200h4.600q1.200 0 2-1.200l1.200-1.600q.8-1.200 2-1.200H962.5a2.2 2.2 0 0 1 2.2 2.2V366.2a2.2 2.2 0 0 1 -2.2 2.2H852.6q-1.200 0-2 1.200l-1.200 1.600q-.8 1.200-2 1.200h-4.600q-1.200 0-2-1.200l-1.200-1.600q-.8-1.200-2-1.200H833.5a2.2 2.2 0 0 1 -2.2 -2.2V346.4a2.2 2.2 0 0 1 2.2 -2.2z" fill="#4c97ff"></path><rect x="880.7" y="348.75" width="36" height="15.5" rx="2" fill="rgba(0,0,0,.03)" stroke="rgba(0,0,0,.16)" stroke-width=".7"></rect><path d="M907 355.5h4.400l-2.200 2.600z" fill="#fff" stroke="#fff" stroke-width=".6" stroke-linejoin="round"></path><path d="M833.5 378.05H837.6q1.2 0 2 1.2l1.2 1.600q.8 1.200 2 1.200h4.600q1.200 0 2-1.200l1.200-1.600q.8-1.200 2-1.200H992.8a2.2 2.2 0 0 1 2.2 2.2V400.05a2.2 2.2 0 0 1 -2.2 2.2H852.6q-1.200 0-2 1.200l-1.200 1.600q-.8 1.200-2 1.200h-4.600q-1.200 0-2-1.200l-1.200-1.600q-.8-1.200-2-1.200H833.5a2.2 2.2 0 0 1 -2.2 -2.2V380.25a2.2 2.2 0 0 1 2.2 -2.2z" fill="#4c97ff"></path><rect x="855" y="382.6" width="25" height="15.5" rx="2" fill="rgba(0,0,0,.03)" stroke="rgba(0,0,0,.16)" stroke-width=".7"></rect><path d="M870.3 389.35h4.400l-2.200 2.600z" fill="#fff" stroke="#fff" stroke-width=".6" stroke-linejoin="round"></path><rect x="910" y="382.6" width="35.8" height="15.5" rx="2" fill="rgba(0,0,0,.03)" stroke="rgba(0,0,0,.16)" stroke-width=".7"></rect><path d="M936.1 389.35h4.400l-2.200 2.600z" fill="#fff" stroke="#fff" stroke-width=".6" stroke-linejoin="round"></path><path d="M833.5 411.9H837.6q1.2 0 2 1.2l1.2 1.600q.8 1.200 2 1.200h4.600q1.200 0 2-1.200l1.200-1.600q.8-1.200 2-1.200H974.5a2.2 2.2 0 0 1 2.2 2.2V433.9a2.2 2.2 0 0 1 -2.2 2.2H852.6q-1.200 0-2 1.200l-1.200 1.600q-.8 1.200-2 1.200h-4.600q-1.200 0-2-1.200l-1.200-1.600q-.8-1.200-2-1.200H833.5a2.2 2.2 0 0 1 -2.2 -2.2V414.1a2.2 2.2 0 0 1 2.2 -2.2z" fill="#4c97ff"></path><rect x="855" y="416.45" width="25" height="15.5" rx="2" fill="rgba(0,0,0,.03)" stroke="rgba(0,0,0,.16)" stroke-width=".7"></rect><path d="M870.3 423.2h4.400l-2.200 2.600z" fill="#fff" stroke="#fff" stroke-width=".6" stroke-linejoin="round"></path><rect x="910" y="416.7" width="19" height="15" rx="7.5" fill="#fff"></rect><path d="M833.5 445.75H837.6q1.2 0 2 1.2l1.2 1.600q.8 1.200 2 1.200h4.600q1.200 0 2-1.200l1.200-1.600q.8-1.200 2-1.200H980.8a2.2 2.2 0 0 1 2.2 2.2V467.75a2.2 2.2 0 0 1 -2.2 2.2H852.6q-1.200 0-2 1.200l-1.200 1.600q-.8 1.200-2 1.200h-4.600q-1.200 0-2-1.200l-1.200-1.600q-.8-1.200-2-1.200H833.5a2.2 2.2 0 0 1 -2.2 -2.2V447.95a2.2 2.2 0 0 1 2.2 -2.2z" fill="#4c97ff"></path><rect x="855" y="450.3" width="25" height="15.5" rx="2" fill="rgba(0,0,0,.03)" stroke="rgba(0,0,0,.16)" stroke-width=".7"></rect><path d="M870.3 457.05h4.400l-2.200 2.600z" fill="#fff" stroke="#fff" stroke-width=".6" stroke-linejoin="round"></path><rect x="904.7" y="450.55" width="19.1" height="15" rx="7.5" fill="#fff"></rect><path d="M833.5 479.6H837.6q1.2 0 2 1.2l1.2 1.600q.8 1.200 2 1.200h4.600q1.200 0 2-1.200l1.200-1.600q.8-1.200 2-1.200H992.8a2.2 2.2 0 0 1 2.2 2.2V501.6a2.2 2.2 0 0 1 -2.2 2.2H852.6q-1.200 0-2 1.200l-1.200 1.600q-.8 1.200-2 1.200h-4.600q-1.200 0-2-1.200l-1.200-1.600q-.8-1.200-2-1.200H833.5a2.2 2.2 0 0 1 -2.2 -2.2V481.8a2.2 2.2 0 0 1 2.2 -2.2z" fill="#4c97ff"></path><rect x="855.3" y="484.4" width="18.9" height="15" rx="7.5" fill="#fff"></rect><rect x="909" y="484.4" width="19.3" height="15" rx="7.5" fill="#fff"></rect><rect x="980" y="484.15" width="25" height="15.5" rx="2" fill="rgba(0,0,0,.03)" stroke="rgba(0,0,0,.16)" stroke-width=".7"></rect><path d="M995.3 490.9h4.400l-2.200 2.600z" fill="#fff" stroke="#fff" stroke-width=".6" stroke-linejoin="round"></path><path d="M833.5 513.45H837.6q1.2 0 2 1.2l1.2 1.600q.8 1.200 2 1.200h4.600q1.200 0 2-1.200l1.200-1.600q.8-1.200 2-1.200H945.8a2.2 2.2 0 0 1 2.2 2.2V535.45a2.2 2.2 0 0 1 -2.2 2.2H852.6q-1.200 0-2 1.200l-1.200 1.600q-.8 1.200-2 1.200h-4.600q-1.200 0-2-1.200l-1.200-1.600q-.8-1.200-2-1.200H833.5a2.2 2.2 0 0 1 -2.2 -2.2V515.65a2.2 2.2 0 0 1 2.2 -2.2z" fill="#4c97ff"></path><rect x="855" y="518" width="25" height="15.5" rx="2" fill="rgba(0,0,0,.03)" stroke="rgba(0,0,0,.16)" stroke-width=".7"></rect><path d="M870.3 524.75h4.400l-2.200 2.600z" fill="#fff" stroke="#fff" stroke-width=".6" stroke-linejoin="round"></path><path d="M833.5 547.3H837.6q1.2 0 2 1.2l1.2 1.600q.8 1.200 2 1.200h4.600q1.200 0 2-1.200l1.200-1.600q.8-1.200 2-1.200H992.8a2.2 2.2 0 0 1 2.2 2.2V569.3a2.2 2.2 0 0 1 -2.2 2.2H852.6q-1.200 0-2 1.200l-1.200 1.600q-.8 1.200-2 1.200h-4.600q-1.200 0-2-1.200l-1.200-1.600q-.8-1.200-2-1.200H833.5a2.2 2.2 0 0 1 -2.2 -2.2V549.5a2.2 2.2 0 0 1 2.2 -2.2z" fill="#4c97ff"></path><rect x="888.8" y="552.1" width="50.2" height="15" rx="7.5" fill="#fff"></rect><rect x="943.7" y="551.85" width="35.3" height="15.5" rx="2" fill="rgba(0,0,0,.03)" stroke="rgba(0,0,0,.16)" stroke-width=".7"></rect><path d="M969.3 558.6h4.400l-2.200 2.600z" fill="#fff" stroke="#fff" stroke-width=".6" stroke-linejoin="round"></path><path d="M833.5 581.15H837.6q1.2 0 2 1.2l1.2 1.600q.8 1.200 2 1.200h4.600q1.200 0 2-1.200l1.200-1.600q.8-1.200 2-1.200H992.8a2.2 2.2 0 0 1 2.2 2.2V603.15a2.2 2.2 0 0 1 -2.2 2.2H852.6q-1.200 0-2 1.200l-1.200 1.600q-.8 1.200-2 1.200h-4.600q-1.200 0-2-1.200l-1.200-1.600q-.8-1.200-2-1.200H833.5a2.2 2.2 0 0 1 -2.2 -2.2V583.35a2.2 2.2 0 0 1 2.2 -2.2z" fill="#4c97ff"></path><rect x="855" y="585.7" width="25" height="15.5" rx="2" fill="rgba(0,0,0,.03)" stroke="rgba(0,0,0,.16)" stroke-width=".7"></rect><path d="M870.3 592.45h4.400l-2.200 2.600z" fill="#fff" stroke="#fff" stroke-width=".6" stroke-linejoin="round"></path><rect x="888.3" y="585.7" width="25" height="15.5" rx="2" fill="rgba(0,0,0,.03)" stroke="rgba(0,0,0,.16)" stroke-width=".7"></rect><path d="M903.6 592.45h4.400l-2.200 2.600z" fill="#fff" stroke="#fff" stroke-width=".6" stroke-linejoin="round"></path><rect x="921.7" y="585.7" width="25.8" height="15.5" rx="2" fill="rgba(0,0,0,.03)" stroke="rgba(0,0,0,.16)" stroke-width=".7"></rect><path d="M937.8 592.45h4.400l-2.200 2.600z" fill="#fff" stroke="#fff" stroke-width=".6" stroke-linejoin="round"></path><path d="M833.5 615H837.6q1.2 0 2 1.2l1.2 1.600q.8 1.200 2 1.200h4.600q1.200 0 2-1.200l1.200-1.600q.8-1.200 2-1.200H992.8a2.2 2.2 0 0 1 2.2 2.2V637a2.2 2.2 0 0 1 -2.2 2.2H852.6q-1.200 0-2 1.200l-1.200 1.600q-.8 1.200-2 1.200h-4.600q-1.200 0-2-1.200l-1.200-1.600q-.8-1.200-2-1.200H833.5a2.2 2.2 0 0 1 -2.2 -2.2V617.2a2.2 2.2 0 0 1 2.2 -2.2z" fill="#4c97ff"></path><rect x="891.7" y="619.55" width="24.6" height="15.5" rx="2" fill="rgba(0,0,0,.03)" stroke="rgba(0,0,0,.16)" stroke-width=".7"></rect><path d="M906.6 626.3h4.400l-2.200 2.600z" fill="#fff" stroke="#fff" stroke-width=".6" stroke-linejoin="round"></path><rect x="948" y="619.55" width="70" height="15.5" rx="2" fill="rgba(0,0,0,.03)" stroke="rgba(0,0,0,.16)" stroke-width=".7"></rect><path d="M1008.3 626.3h4.400l-2.200 2.600z" fill="#fff" stroke="#fff" stroke-width=".6" stroke-linejoin="round"></path><path d="M833.5 648.85H837.6q1.2 0 2 1.2l1.2 1.600q.8 1.200 2 1.200h4.600q1.200 0 2-1.200l1.200-1.600q.8-1.200 2-1.200H964.1a2.2 2.2 0 0 1 2.2 2.2V670.85a2.2 2.2 0 0 1 -2.2 2.2H852.6q-1.200 0-2 1.200l-1.200 1.600q-.8 1.200-2 1.200h-4.600q-1.200 0-2-1.200l-1.200-1.600q-.8-1.200-2-1.200H833.5a2.2 2.2 0 0 1 -2.2 -2.2V651.05a2.2 2.2 0 0 1 2.2 -2.2z" fill="#4c97ff"></path><rect x="882.5" y="653.4" width="25" height="15.5" rx="2" fill="rgba(0,0,0,.03)" stroke="rgba(0,0,0,.16)" stroke-width=".7"></rect><path d="M897.8 660.15h4.400l-2.200 2.600z" fill="#fff" stroke="#fff" stroke-width=".6" stroke-linejoin="round"></path><rect x="911.7" y="653.65" width="50.3" height="15" rx="7.5" fill="#fff"></rect><path d="M833.5 682.7H837.6q1.2 0 2 1.2l1.2 1.600q.8 1.200 2 1.200h4.600q1.200 0 2-1.200l1.200-1.600q.8-1.200 2-1.200H992.8a2.2 2.2 0 0 1 2.2 2.2V704.7a2.2 2.2 0 0 1 -2.2 2.2H852.6q-1.200 0-2 1.200l-1.200 1.600q-.8 1.200-2 1.200h-4.600q-1.200 0-2-1.200l-1.200-1.600q-.8-1.200-2-1.200H833.5a2.2 2.2 0 0 1 -2.2 -2.2V684.9a2.2 2.2 0 0 1 2.2 -2.2z" fill="#4c97ff"></path><rect x="911.3" y="687.25" width="25.4" height="15.5" rx="2" fill="rgba(0,0,0,.03)" stroke="rgba(0,0,0,.16)" stroke-width=".7"></rect><path d="M927 694h4.400l-2.200 2.600z" fill="#fff" stroke="#fff" stroke-width=".6" stroke-linejoin="round"></path><rect x="980.3" y="687.5" width="19.7" height="15" rx="7.5" fill="#fff"></rect><path d="M833.5 716.55H837.6q1.2 0 2 1.2l1.2 1.600q.8 1.200 2 1.200h4.600q1.200 0 2-1.200l1.200-1.600q.8-1.200 2-1.200H980.8a2.2 2.2 0 0 1 2.2 2.2V738.55a2.2 2.2 0 0 1 -2.2 2.2H852.6q-1.200 0-2 1.200l-1.200 1.600q-.8 1.200-2 1.200h-4.600q-1.200 0-2-1.200l-1.200-1.600q-.8-1.200-2-1.200H833.5a2.2 2.2 0 0 1 -2.2 -2.2V718.75a2.2 2.2 0 0 1 2.2 -2.2z" fill="#4c97ff"></path><rect x="866.7" y="721.1" width="25.8" height="15.5" rx="2" fill="rgba(0,0,0,.03)" stroke="rgba(0,0,0,.16)" stroke-width=".7"></rect><path d="M882.8 727.85h4.400l-2.200 2.600z" fill="#fff" stroke="#fff" stroke-width=".6" stroke-linejoin="round"></path><rect x="900.3" y="721.1" width="79.4" height="15.5" rx="2" fill="rgba(0,0,0,.03)" stroke="rgba(0,0,0,.16)" stroke-width=".7"></rect><path d="M970 727.85h4.400l-2.200 2.600z" fill="#fff" stroke="#fff" stroke-width=".6" stroke-linejoin="round"></path><path d="M833.5 750.4H837.6q1.2 0 2 1.2l1.2 1.600q.8 1.200 2 1.200h4.600q1.200 0 2-1.200l1.200-1.600q.8-1.200 2-1.200H992.8a2.2 2.2 0 0 1 2.2 2.2V772.4a2.2 2.2 0 0 1 -2.2 2.2H852.6q-1.200 0-2 1.200l-1.200 1.600q-.8 1.200-2 1.200h-4.600q-1.200 0-2-1.200l-1.200-1.600q-.8-1.200-2-1.200H833.5a2.2 2.2 0 0 1 -2.2 -2.2V752.6a2.2 2.2 0 0 1 2.2 -2.2z" fill="#4c97ff"></path><rect x="919.3" y="754.95" width="24" height="15.5" rx="2" fill="rgba(0,0,0,.03)" stroke="rgba(0,0,0,.16)" stroke-width=".7"></rect><path d="M933.6 761.7h4.400l-2.200 2.600z" fill="#fff" stroke="#fff" stroke-width=".6" stroke-linejoin="round"></path><rect x="975.3" y="754.95" width="54.7" height="15.5" rx="2" fill="rgba(0,0,0,.03)" stroke="rgba(0,0,0,.16)" stroke-width=".7"></rect><path d="M1020.3 761.7h4.400l-2.200 2.600z" fill="#fff" stroke="#fff" stroke-width=".6" stroke-linejoin="round"></path><path d="M833.5 784.25H837.6q1.2 0 2 1.2l1.2 1.600q.8 1.200 2 1.200h4.600q1.200 0 2-1.200l1.200-1.600q.8-1.200 2-1.200H968.8a2.2 2.2 0 0 1 2.2 2.2V806.25a2.2 2.2 0 0 1 -2.2 2.2H852.6q-1.200 0-2 1.200l-1.200 1.600q-.8 1.200-2 1.200h-4.600q-1.200 0-2-1.200l-1.200-1.600q-.8-1.200-2-1.200H833.5a2.2 2.2 0 0 1 -2.2 -2.2V786.45a2.2 2.2 0 0 1 2.2 -2.2z" fill="#4c97ff"></path>
 <text x="835" y="359.6" font-size="8.6" fill="#fff" textLength="41" lengthAdjust="spacingAndGlyphs">기본 LED를</text><text x="886.03" y="359.6" font-size="8.6" fill="#fff" textLength="16.34" lengthAdjust="spacingAndGlyphs">높음</text><text x="921" y="359.6" font-size="8.6" fill="#fff" textLength="39" lengthAdjust="spacingAndGlyphs">(으)로 설정</text><text x="835" y="393.45" font-size="8.6" fill="#fff" textLength="8" lengthAdjust="spacingAndGlyphs">핀</text><text x="860.7" y="393.45" font-size="8.6" fill="#fff" textLength="4.6" lengthAdjust="spacingAndGlyphs">0</text><text x="885" y="393.45" font-size="8.6" fill="#fff" textLength="20.3" lengthAdjust="spacingAndGlyphs">을(를)</text><text x="915.23" y="393.45" font-size="8.6" fill="#fff" textLength="16.34" lengthAdjust="spacingAndGlyphs">높음</text><text x="950.8" y="393.45" font-size="8.6" fill="#fff" textLength="38.7" lengthAdjust="spacingAndGlyphs">(으)로 설정</text><text x="835" y="427.3" font-size="8.6" fill="#fff" textLength="8" lengthAdjust="spacingAndGlyphs">핀</text><text x="860.7" y="427.3" font-size="8.6" fill="#fff" textLength="4.6" lengthAdjust="spacingAndGlyphs">3</text><text x="885" y="427.3" font-size="8.6" fill="#fff" textLength="20.3" lengthAdjust="spacingAndGlyphs">을(를)</text><text x="917.2" y="427.22" font-size="8.4" fill="#575e75" textLength="4.6" lengthAdjust="spacingAndGlyphs">0</text><text x="933.7" y="427.3" font-size="8.6" fill="#fff" textLength="38.3" lengthAdjust="spacingAndGlyphs">(으)로 설정</text><text x="835" y="461.15" font-size="8.6" fill="#fff" textLength="8" lengthAdjust="spacingAndGlyphs">핀</text><text x="860.7" y="461.15" font-size="8.6" fill="#fff" textLength="4.6" lengthAdjust="spacingAndGlyphs">0</text><text x="885" y="461.15" font-size="8.6" fill="#fff" textLength="15" lengthAdjust="spacingAndGlyphs">에서</text><text x="911.95" y="461.07" font-size="8.4" fill="#575e75" textLength="4.6" lengthAdjust="spacingAndGlyphs">0</text><text x="928.7" y="461.15" font-size="8.6" fill="#fff" textLength="50.3" lengthAdjust="spacingAndGlyphs">도로 서보 회전</text><text x="862.45" y="494.92" font-size="8.4" fill="#575e75" textLength="4.6" lengthAdjust="spacingAndGlyphs">1</text><text x="879" y="495" font-size="8.6" fill="#fff" textLength="24.3" lengthAdjust="spacingAndGlyphs">초 동안</text><text x="914.05" y="494.92" font-size="8.4" fill="#575e75" textLength="9.2" lengthAdjust="spacingAndGlyphs">60</text><text x="933.3" y="495" font-size="8.6" fill="#fff" textLength="42.5" lengthAdjust="spacingAndGlyphs">의 톤으로 핀</text><text x="986" y="495" font-size="8.6" fill="#fff" textLength="4.6" lengthAdjust="spacingAndGlyphs">0</text><text x="835" y="528.85" font-size="8.6" fill="#fff" textLength="8" lengthAdjust="spacingAndGlyphs">핀</text><text x="860.7" y="528.85" font-size="8.6" fill="#fff" textLength="4.6" lengthAdjust="spacingAndGlyphs">0</text><text x="885" y="528.85" font-size="8.6" fill="#fff" textLength="58.3" lengthAdjust="spacingAndGlyphs">에서 스피커 끄기</text><text x="835" y="562.7" font-size="8.6" fill="#fff" textLength="49" lengthAdjust="spacingAndGlyphs">시리얼 모니터</text><text x="893.8" y="562.62" font-size="8.4" fill="#575e75" textLength="40.2" lengthAdjust="spacingAndGlyphs">hello world</text><text x="948.68" y="562.7" font-size="8.6" fill="#fff" textLength="16.34" lengthAdjust="spacingAndGlyphs">포함</text><text x="835" y="596.55" font-size="8.6" fill="#fff" textLength="8" lengthAdjust="spacingAndGlyphs">핀</text><text x="860.7" y="596.55" font-size="8.6" fill="#fff" textLength="4.6" lengthAdjust="spacingAndGlyphs">3</text><text x="894" y="596.55" font-size="8.6" fill="#fff" textLength="4.6" lengthAdjust="spacingAndGlyphs">6</text><text x="927.8" y="596.55" font-size="8.6" fill="#fff" textLength="4.6" lengthAdjust="spacingAndGlyphs">5</text><text x="951.7" y="596.55" font-size="8.6" fill="#fff" textLength="38.8" lengthAdjust="spacingAndGlyphs">의 RGB LED</text><text x="835" y="630.4" font-size="8.6" fill="#fff" textLength="51.7" lengthAdjust="spacingAndGlyphs">configure LCD</text><text x="897.2" y="630.4" font-size="8.6" fill="#fff" textLength="4.6" lengthAdjust="spacingAndGlyphs">1</text><text x="920.8" y="630.4" font-size="8.6" fill="#fff" textLength="23.4" lengthAdjust="spacingAndGlyphs">type to</text><text x="953.3" y="630.4" font-size="8.6" fill="#fff" textLength="58.4" lengthAdjust="spacingAndGlyphs">I2C (MCP23008)</text><text x="835" y="664.25" font-size="8.6" fill="#fff" textLength="42.5" lengthAdjust="spacingAndGlyphs">print to LCD</text><text x="888.2" y="664.25" font-size="8.6" fill="#fff" textLength="4.6" lengthAdjust="spacingAndGlyphs">1</text><text x="916.7" y="664.17" font-size="8.4" fill="#575e75" textLength="40.3" lengthAdjust="spacingAndGlyphs">hello world</text><text x="835" y="698.1" font-size="8.6" fill="#fff" textLength="72" lengthAdjust="spacingAndGlyphs">set position on LCD</text><text x="917.2" y="698.1" font-size="8.6" fill="#fff" textLength="4.6" lengthAdjust="spacingAndGlyphs">1</text><text x="940.8" y="698.1" font-size="8.6" fill="#fff" textLength="35.5" lengthAdjust="spacingAndGlyphs">to column</text><text x="987.85" y="698.02" font-size="8.4" fill="#575e75" textLength="4.6" lengthAdjust="spacingAndGlyphs">0</text><text x="835" y="731.95" font-size="8.6" fill="#fff" textLength="26.7" lengthAdjust="spacingAndGlyphs">on LCD</text><text x="872.8" y="731.95" font-size="8.6" fill="#fff" textLength="4.6" lengthAdjust="spacingAndGlyphs">1</text><text x="905.8" y="731.95" font-size="8.6" fill="#fff" textLength="57.9" lengthAdjust="spacingAndGlyphs">clear the screen</text><text x="835" y="765.8" font-size="8.6" fill="#fff" textLength="79.7" lengthAdjust="spacingAndGlyphs">configure LED display</text><text x="924.5" y="765.8" font-size="8.6" fill="#fff" textLength="4.6" lengthAdjust="spacingAndGlyphs">1</text><text x="948.3" y="765.8" font-size="8.6" fill="#fff" textLength="23" lengthAdjust="spacingAndGlyphs">type to</text><text x="981.3" y="765.8" font-size="8.6" fill="#fff" textLength="36.7" lengthAdjust="spacingAndGlyphs">7-segment</text>
 <rect x="983.500" y="340" width="3.500" height="385.500" rx="1.500" fill="#c6c5c8"></rect>
</svg>
<span class="t" style="left: 840px; top: 263.5px; font-size: 9.5px; font-weight: bold; color: rgb(51, 51, 51); transform-origin: left top; transform: scaleX(1.063);">블록</span>
<span class="t" style="left: 844.5px; top: 289px; font-size: 9.3px; color: rgb(87, 94, 117); transform-origin: left top; transform: scaleX(1.001);">출력</span>
<span class="t" style="left: 927px; top: 289px; font-size: 9.3px; color: rgb(87, 94, 117); transform-origin: left top; transform: scaleX(1.001);">제어</span>
<span class="t" style="left: 844.5px; top: 307px; font-size: 9.3px; color: rgb(87, 94, 117); transform-origin: left top; transform: scaleX(1.001);">입력</span>
<span class="t" style="left: 927px; top: 307px; font-size: 9.3px; color: rgb(87, 94, 117); transform-origin: left top; transform: scaleX(1.001);">계산</span>
<span class="t" style="left: 1317px; top: 262.5px; font-size: 9.8px; color: rgb(51, 51, 51); transform-origin: left top; transform: scaleX(0.989);">1 (Arduino Uno R3)</span>
<!-- workspace -->
<svg style="left:989px;top:252px;overflow:hidden" width="446" height="555" viewBox="989 252 446 555" font-family="Liberation Sans, NanumGothic, Noto Sans CJK KR, sans-serif">
 <path d="M1008 262.500v6.500M1004.200 266l3.800 4 3.800-4z" fill="#222" stroke="#222" stroke-width="2.200" stroke-linejoin="round"></path><path d="M1003 273.500h10" stroke="#222" stroke-width="1.300"></path>
 <path d="M1414.300 266h5.400l-2.700 3z" fill="#222"></path>
 <g>
 <rect x="991.2" y="284" width="11.6" height="17" rx="2.2" fill="#ffab19"></rect><rect x="991.2" y="313" width="11.6" height="15.5" rx="2.2" fill="#ffab19"></rect><rect x="1036.5" y="283" width="80" height="20.5" rx="2.2" fill="#ffab19"></rect><rect x="1036.5" y="284" width="9" height="414" rx="2.2" fill="#ffab19"></rect><rect x="1036.5" y="683" width="80" height="17" rx="2.2" fill="#ffab19"></rect><rect x="1044.5" y="350" width="157" height="28.5" rx="2.2" fill="#ffab19"></rect><rect x="1044.5" y="350" width="9" height="333" rx="2.2" fill="#ffab19"></rect><rect x="1044.5" y="449" width="157" height="18" rx="2.2" fill="#ffab19"></rect><rect x="1044.5" y="667.5" width="157" height="17" rx="2.2" fill="#ffab19"></rect><rect x="1052.5" y="466" width="156.5" height="27.5" rx="2.2" fill="#ffab19"></rect><rect x="1052.5" y="466" width="8.5" height="201" rx="2.2" fill="#ffab19"></rect><rect x="1052.5" y="564" width="156.5" height="18" rx="2.2" fill="#ffab19"></rect><rect x="1052.5" y="651.5" width="156.5" height="16.5" rx="2.2" fill="#ffab19"></rect><path d="M1044.5 350V682.500a2 2 0 0 0 2 2H1050.800q1.200 0 2 1.200l1.200 1.600q.8 1.200 2 1.200h4.600q1.200 0 2-1.200l1.200-1.600q.8-1.200 2-1.200H1116" fill="none" stroke="#d98f10" stroke-width=".6"></path><path d="M1052.500 467V666a2 2 0 0 0 2 2H1058.800q1.200 0 2 1.200l1.200 1.600q.8 1.200 2 1.200h4.600q1.200 0 2-1.200l1.200-1.600q.8-1.200 2-1.200H1201.500" fill="none" stroke="#d98f10" stroke-width=".6"></path><path d="M1201.500 467.200H1073.800q-1.200 0-2 1.200l-1.200 1.600q-.8 1.200-2 1.200h-4.600q-1.200 0-2-1.200l-1.200-1.600q-.8-1.200-2-1.200H1054" fill="none" stroke="#d98f10" stroke-width=".6"></path><path d="M1050.5 303q1.200 0 2 1.200l1.200 1.600q.8 1.200 2 1.200h4.600q1.200 0 2-1.200l1.200-1.600q.8-1.200 2-1.200z" fill="#ffab19"></path><path d="M1058.5 378q1.200 0 2 1.200l1.200 1.600q.8 1.200 2 1.200h4.600q1.200 0 2-1.200l1.200-1.600q.8-1.200 2-1.200z" fill="#ffab19"></path><path d="M1066.2 493.2q1.200 0 2 1.200l1.200 1.600q.8 1.200 2 1.200h4.600q1.200 0 2-1.200l1.200-1.600q.8-1.200 2-1.200z" fill="#ffab19"></path><path d="M1066.2 581.2q1.200 0 2 1.200l1.200 1.600q.8 1.200 2 1.200h4.600q1.200 0 2-1.200l1.200-1.600q.8-1.200 2-1.200z" fill="#ffab19"></path><path d="M1046.7 303.2H1050.8q1.2 0 2 1.2l1.2 1.600q.8 1.200 2 1.200h4.600q1.200 0 2-1.200l1.200-1.600q.8-1.200 2-1.200H1262.8a2.2 2.2 0 0 1 2.2 2.2V324.6a2.2 2.2 0 0 1 -2.2 2.2H1065.8q-1.200 0-2 1.200l-1.200 1.600q-.8 1.200-2 1.200h-4.600q-1.200 0-2-1.200l-1.200-1.600q-.8-1.200-2-1.200H1046.7a2.2 2.2 0 0 1 -2.2 -2.2V305.4a2.2 2.2 0 0 1 2.2 -2.2z" fill="#d65cd6"></path><rect x="1068.5" y="307.45" width="24" height="15.5" rx="2" fill="rgba(0,0,0,.03)" stroke="rgba(0,0,0,.16)" stroke-width=".7"></rect><path d="M1082.8 314.2h4.400l-2.200 2.600z" fill="#fff" stroke="#fff" stroke-width=".6" stroke-linejoin="round"></path><rect x="1123.700" y="305.8" width="94.200" height="18.800" rx="9.400" fill="#855cd6"></rect><rect x="1167.2" y="307.45" width="24.8" height="15.5" rx="2" fill="rgba(0,0,0,.03)" stroke="rgba(0,0,0,.16)" stroke-width=".7"></rect><path d="M1182.3 314.2h4.400l-2.200 2.600z" fill="#fff" stroke="#fff" stroke-width=".6" stroke-linejoin="round"></path><path d="M1046.7 326.6H1050.8q1.2 0 2 1.2l1.2 1.600q.8 1.200 2 1.200h4.600q1.200 0 2-1.200l1.200-1.600q.8-1.200 2-1.200H1262.8a2.2 2.2 0 0 1 2.2 2.2V348a2.2 2.2 0 0 1 -2.2 2.2H1065.8q-1.200 0-2 1.200l-1.200 1.600q-.8 1.200-2 1.200h-4.600q-1.200 0-2-1.200l-1.200-1.600q-.8-1.200-2-1.200H1046.7a2.2 2.2 0 0 1 -2.2 -2.2V328.8a2.2 2.2 0 0 1 2.2 -2.2z" fill="#d65cd6"></path><rect x="1068.5" y="330.85" width="24" height="15.5" rx="2" fill="rgba(0,0,0,.03)" stroke="rgba(0,0,0,.16)" stroke-width=".7"></rect><path d="M1082.8 337.6h4.400l-2.200 2.600z" fill="#fff" stroke="#fff" stroke-width=".6" stroke-linejoin="round"></path><rect x="1123.700" y="329.2" width="94.200" height="18.800" rx="9.400" fill="#855cd6"></rect><rect x="1167.2" y="330.85" width="24.8" height="15.5" rx="2" fill="rgba(0,0,0,.03)" stroke="rgba(0,0,0,.16)" stroke-width=".7"></rect><path d="M1182.3 337.6h4.400l-2.200 2.600z" fill="#fff" stroke="#fff" stroke-width=".6" stroke-linejoin="round"></path><path d="M1068.5 364.2l11 -12h77.5l11 12l-11 12h-77.5z" fill="#5cb85c"></path><circle cx="1092.4" cy="364.2" r="11.500" fill="#d65cd6"></circle><rect x="1107.8" y="356.45" width="25.7" height="15.5" rx="2" fill="rgba(0,0,0,.03)" stroke="rgba(0,0,0,.2)" stroke-width=".7"></rect><path d="M1123.8 363.2h4.400l-2.200 2.600z" fill="#fff" stroke="#fff" stroke-width=".6" stroke-linejoin="round"></path><rect x="1138" y="356.7" width="19.2" height="15" rx="7.5" fill="#fff"></rect><path d="M1076.2 480l11 -12h77.5l11 12l-11 12h-77.5z" fill="#5cb85c"></path><circle cx="1100.1" cy="480" r="11.500" fill="#d65cd6"></circle><rect x="1115.5" y="472.25" width="25.7" height="15.5" rx="2" fill="rgba(0,0,0,.03)" stroke="rgba(0,0,0,.2)" stroke-width=".7"></rect><path d="M1131.5 479h4.400l-2.200 2.600z" fill="#fff" stroke="#fff" stroke-width=".6" stroke-linejoin="round"></path><rect x="1145.7" y="472.5" width="19.2" height="15" rx="7.5" fill="#fff"></rect><path d="M1054.7 378.3H1058.8q1.2 0 2 1.2l1.2 1.600q.8 1.200 2 1.200h4.600q1.200 0 2-1.200l1.200-1.600q.8-1.200 2-1.200H1301.5a2.2 2.2 0 0 1 2.2 2.2V400a2.2 2.2 0 0 1 -2.2 2.2H1073.8q-1.200 0-2 1.200l-1.200 1.600q-.8 1.200-2 1.200h-4.600q-1.200 0-2-1.200l-1.200-1.600q-.8-1.200-2-1.200H1054.7a2.2 2.2 0 0 1 -2.2 -2.2V380.5a2.2 2.2 0 0 1 2.2 -2.2z" fill="#4c97ff"></path><rect x="1077" y="382.95" width="19" height="15" rx="7.5" fill="#fff"></rect><rect x="1130.4" y="382.95" width="23.8" height="15" rx="7.5" fill="#fff"></rect><rect x="1207" y="382.7" width="28" height="15.5" rx="2" fill="rgba(0,0,0,.03)" stroke="rgba(0,0,0,.16)" stroke-width=".7"></rect><path d="M1225.3 389.45h4.400l-2.200 2.600z" fill="#fff" stroke="#fff" stroke-width=".6" stroke-linejoin="round"></path><path d="M1054.7 402.5H1058.8q1.2 0 2 1.2l1.2 1.600q.8 1.200 2 1.200h4.600q1.200 0 2-1.200l1.200-1.600q.8-1.200 2-1.200H1212.8a2.2 2.2 0 0 1 2.2 2.2V423.6a2.2 2.2 0 0 1 -2.2 2.2H1073.8q-1.200 0-2 1.200l-1.200 1.600q-.8 1.200-2 1.200h-4.600q-1.200 0-2-1.200l-1.200-1.600q-.8-1.200-2-1.200H1054.7a2.2 2.2 0 0 1 -2.2 -2.2V404.7a2.2 2.2 0 0 1 2.2 -2.2z" fill="#4c97ff"></path><rect x="1076.6" y="406.6" width="24.8" height="15.5" rx="2" fill="rgba(0,0,0,.03)" stroke="rgba(0,0,0,.16)" stroke-width=".7"></rect><path d="M1091.7 413.35h4.400l-2.200 2.600z" fill="#fff" stroke="#fff" stroke-width=".6" stroke-linejoin="round"></path><rect x="1131.7" y="406.6" width="35.5" height="15.5" rx="2" fill="rgba(0,0,0,.03)" stroke="rgba(0,0,0,.16)" stroke-width=".7"></rect><path d="M1157.5 413.35h4.400l-2.200 2.600z" fill="#fff" stroke="#fff" stroke-width=".6" stroke-linejoin="round"></path><path d="M1054.7 426.1H1058.8q1.2 0 2 1.2l1.2 1.600q.8 1.200 2 1.200h4.600q1.200 0 2-1.200l1.200-1.600q.8-1.200 2-1.200H1212.8a2.2 2.2 0 0 1 2.2 2.2V447.2a2.2 2.2 0 0 1 -2.2 2.2H1073.8q-1.200 0-2 1.200l-1.200 1.600q-.8 1.200-2 1.200h-4.600q-1.200 0-2-1.200l-1.200-1.600q-.8-1.200-2-1.200H1054.7a2.2 2.2 0 0 1 -2.2 -2.2V428.3a2.2 2.2 0 0 1 2.2 -2.2z" fill="#4c97ff"></path><rect x="1076.6" y="430.2" width="24.8" height="15.5" rx="2" fill="rgba(0,0,0,.03)" stroke="rgba(0,0,0,.16)" stroke-width=".7"></rect><path d="M1091.7 436.95h4.400l-2.200 2.600z" fill="#fff" stroke="#fff" stroke-width=".6" stroke-linejoin="round"></path><rect x="1131.7" y="430.2" width="35.5" height="15.5" rx="2" fill="rgba(0,0,0,.03)" stroke="rgba(0,0,0,.16)" stroke-width=".7"></rect><path d="M1157.5 436.95h4.400l-2.200 2.600z" fill="#fff" stroke="#fff" stroke-width=".6" stroke-linejoin="round"></path><path d="M1062.4 493.4H1066.5q1.2 0 2 1.2l1.2 1.600q.8 1.200 2 1.200h4.600q1.200 0 2-1.200l1.200-1.600q.8-1.200 2-1.200H1304.8a2.2 2.2 0 0 1 2.2 2.2V515.1a2.2 2.2 0 0 1 -2.2 2.2H1081.5q-1.200 0-2 1.200l-1.200 1.600q-.8 1.200-2 1.200h-4.600q-1.200 0-2-1.200l-1.200-1.600q-.8-1.200-2-1.200H1062.4a2.2 2.2 0 0 1 -2.2 -2.2V495.6a2.2 2.2 0 0 1 2.2 -2.2z" fill="#4c97ff"></path><rect x="1084.7" y="498.05" width="19" height="15" rx="7.5" fill="#fff"></rect><rect x="1138.1" y="498.05" width="20" height="15" rx="7.5" fill="#fff"></rect><rect x="1210.9" y="497.8" width="28" height="15.5" rx="2" fill="rgba(0,0,0,.03)" stroke="rgba(0,0,0,.16)" stroke-width=".7"></rect><path d="M1229.2 504.55h4.400l-2.200 2.600z" fill="#fff" stroke="#fff" stroke-width=".6" stroke-linejoin="round"></path><path d="M1062.4 517.6H1066.5q1.2 0 2 1.2l1.2 1.600q.8 1.200 2 1.200h4.600q1.200 0 2-1.200l1.200-1.600q.8-1.200 2-1.200H1220.5a2.2 2.2 0 0 1 2.2 2.2V538.7a2.2 2.2 0 0 1 -2.2 2.2H1081.5q-1.200 0-2 1.200l-1.200 1.600q-.8 1.200-2 1.200h-4.600q-1.200 0-2-1.200l-1.200-1.600q-.8-1.200-2-1.200H1062.4a2.2 2.2 0 0 1 -2.2 -2.2V519.8a2.2 2.2 0 0 1 2.2 -2.2z" fill="#4c97ff"></path><rect x="1084.3" y="521.7" width="24.8" height="15.5" rx="2" fill="rgba(0,0,0,.03)" stroke="rgba(0,0,0,.16)" stroke-width=".7"></rect><path d="M1099.4 528.45h4.400l-2.200 2.600z" fill="#fff" stroke="#fff" stroke-width=".6" stroke-linejoin="round"></path><rect x="1139.4" y="521.7" width="35.5" height="15.5" rx="2" fill="rgba(0,0,0,.03)" stroke="rgba(0,0,0,.16)" stroke-width=".7"></rect><path d="M1165.2 528.45h4.400l-2.200 2.600z" fill="#fff" stroke="#fff" stroke-width=".6" stroke-linejoin="round"></path><path d="M1062.4 541.2H1066.5q1.2 0 2 1.2l1.2 1.600q.8 1.200 2 1.200h4.600q1.200 0 2-1.200l1.200-1.600q.8-1.200 2-1.200H1220.5a2.2 2.2 0 0 1 2.2 2.2V562.3a2.2 2.2 0 0 1 -2.2 2.2H1081.5q-1.200 0-2 1.200l-1.200 1.600q-.8 1.200-2 1.200h-4.600q-1.200 0-2-1.200l-1.200-1.600q-.8-1.200-2-1.200H1062.4a2.2 2.2 0 0 1 -2.2 -2.2V543.4a2.2 2.2 0 0 1 2.2 -2.2z" fill="#4c97ff"></path><rect x="1084.3" y="545.3" width="24.8" height="15.5" rx="2" fill="rgba(0,0,0,.03)" stroke="rgba(0,0,0,.16)" stroke-width=".7"></rect><path d="M1099.4 552.05h4.400l-2.200 2.600z" fill="#fff" stroke="#fff" stroke-width=".6" stroke-linejoin="round"></path><rect x="1139.4" y="545.3" width="35.5" height="15.5" rx="2" fill="rgba(0,0,0,.03)" stroke="rgba(0,0,0,.16)" stroke-width=".7"></rect><path d="M1165.2 552.05h4.400l-2.200 2.600z" fill="#fff" stroke="#fff" stroke-width=".6" stroke-linejoin="round"></path><path d="M1062.4 581.4H1066.5q1.2 0 2 1.2l1.2 1.600q.8 1.200 2 1.200h4.600q1.200 0 2-1.200l1.200-1.600q.8-1.200 2-1.200H1179.2a2.2 2.2 0 0 1 2.2 2.2V602.3a2.2 2.2 0 0 1 -2.2 2.2H1081.5q-1.200 0-2 1.200l-1.200 1.600q-.8 1.200-2 1.200h-4.600q-1.200 0-2-1.200l-1.200-1.600q-.8-1.200-2-1.200H1062.4a2.2 2.2 0 0 1 -2.2 -2.2V583.6a2.2 2.2 0 0 1 2.2 -2.2z" fill="#4c97ff"></path><rect x="1084.5" y="585.4" width="28.5" height="15.5" rx="2" fill="rgba(0,0,0,.03)" stroke="rgba(0,0,0,.16)" stroke-width=".7"></rect><path d="M1103.3 592.15h4.400l-2.200 2.600z" fill="#fff" stroke="#fff" stroke-width=".6" stroke-linejoin="round"></path><path d="M1062.4 604.7H1066.5q1.2 0 2 1.2l1.2 1.600q.8 1.200 2 1.200h4.600q1.200 0 2-1.200l1.200-1.600q.8-1.200 2-1.200H1220.5a2.2 2.2 0 0 1 2.2 2.2V625.8a2.2 2.2 0 0 1 -2.2 2.2H1081.5q-1.200 0-2 1.200l-1.200 1.600q-.8 1.200-2 1.200h-4.600q-1.200 0-2-1.200l-1.200-1.600q-.8-1.200-2-1.200H1062.4a2.2 2.2 0 0 1 -2.2 -2.2V606.9a2.2 2.2 0 0 1 2.2 -2.2z" fill="#4c97ff"></path><rect x="1084.3" y="608.8" width="24.8" height="15.5" rx="2" fill="rgba(0,0,0,.03)" stroke="rgba(0,0,0,.16)" stroke-width=".7"></rect><path d="M1099.4 615.55h4.400l-2.200 2.600z" fill="#fff" stroke="#fff" stroke-width=".6" stroke-linejoin="round"></path><rect x="1139.4" y="608.8" width="35.5" height="15.5" rx="2" fill="rgba(0,0,0,.03)" stroke="rgba(0,0,0,.16)" stroke-width=".7"></rect><path d="M1165.2 615.55h4.400l-2.200 2.600z" fill="#fff" stroke="#fff" stroke-width=".6" stroke-linejoin="round"></path><path d="M1062.4 628.3H1066.5q1.2 0 2 1.2l1.2 1.600q.8 1.200 2 1.200h4.600q1.200 0 2-1.200l1.200-1.600q.8-1.200 2-1.200H1220.5a2.2 2.2 0 0 1 2.2 2.2V649.4a2.2 2.2 0 0 1 -2.2 2.2H1081.5q-1.200 0-2 1.200l-1.200 1.600q-.8 1.200-2 1.200h-4.600q-1.200 0-2-1.200l-1.200-1.600q-.8-1.200-2-1.200H1062.4a2.2 2.2 0 0 1 -2.2 -2.2V630.5a2.2 2.2 0 0 1 2.2 -2.2z" fill="#4c97ff"></path><rect x="1084.3" y="632.4" width="24.8" height="15.5" rx="2" fill="rgba(0,0,0,.03)" stroke="rgba(0,0,0,.16)" stroke-width=".7"></rect><path d="M1099.4 639.15h4.400l-2.200 2.600z" fill="#fff" stroke="#fff" stroke-width=".6" stroke-linejoin="round"></path><rect x="1139.4" y="632.4" width="35.5" height="15.5" rx="2" fill="rgba(0,0,0,.03)" stroke="rgba(0,0,0,.16)" stroke-width=".7"></rect><path d="M1165.2 639.15h4.400l-2.200 2.600z" fill="#fff" stroke="#fff" stroke-width=".6" stroke-linejoin="round"></path><path d="M1045.5 326.6H1050.8q1.200 0 2 1.200l1.200 1.600q.8 1.200 2 1.200h4.600q1.200 0 2-1.200l1.200-1.600q.8-1.200 2-1.200H1264" fill="none" stroke="rgba(0,0,40,.16)" stroke-width=".7"></path><path d="M1053.5 402.5H1058.8q1.200 0 2 1.200l1.200 1.600q.8 1.200 2 1.200h4.600q1.200 0 2-1.200l1.200-1.600q.8-1.200 2-1.200H1214" fill="none" stroke="rgba(0,0,40,.16)" stroke-width=".7"></path><path d="M1053.5 426.1H1058.8q1.200 0 2 1.200l1.200 1.600q.8 1.200 2 1.200h4.600q1.200 0 2-1.200l1.200-1.600q.8-1.200 2-1.200H1214" fill="none" stroke="rgba(0,0,40,.16)" stroke-width=".7"></path><path d="M1061.2 517.6H1066.5q1.200 0 2 1.200l1.200 1.600q.8 1.200 2 1.200h4.600q1.200 0 2-1.200l1.200-1.600q.8-1.200 2-1.200H1221.5" fill="none" stroke="rgba(0,0,40,.16)" stroke-width=".7"></path><path d="M1061.2 541.2H1066.5q1.200 0 2 1.200l1.200 1.600q.8 1.200 2 1.200h4.600q1.200 0 2-1.200l1.200-1.600q.8-1.200 2-1.200H1221.5" fill="none" stroke="rgba(0,0,40,.16)" stroke-width=".7"></path><path d="M1061.2 604.7H1066.5q1.200 0 2 1.200l1.200 1.600q.8 1.200 2 1.200h4.600q1.200 0 2-1.200l1.200-1.600q.8-1.200 2-1.200H1180.4" fill="none" stroke="rgba(0,0,40,.16)" stroke-width=".7"></path><path d="M1061.2 628.3H1066.5q1.200 0 2 1.200l1.200 1.600q.8 1.200 2 1.200h4.600q1.200 0 2-1.200l1.200-1.600q.8-1.200 2-1.200H1221.5" fill="none" stroke="rgba(0,0,40,.16)" stroke-width=".7"></path>
 <text x="1041" y="295.1" font-size="8.6" fill="#fff" textLength="15" lengthAdjust="spacingAndGlyphs">계속</text><text x="1049" y="461.1" font-size="8.6" fill="#fff" textLength="49" lengthAdjust="spacingAndGlyphs">그렇지 않으면</text><text x="1057" y="576.1" font-size="8.6" fill="#fff" textLength="49" lengthAdjust="spacingAndGlyphs">그렇지 않으면</text><text x="1073.7" y="318.3" font-size="8.6" fill="#fff" textLength="4.6" lengthAdjust="spacingAndGlyphs">a</text><text x="1098.8" y="318.3" font-size="8.6" fill="#fff" textLength="20.2" lengthAdjust="spacingAndGlyphs">을(를)</text><text x="1129.9" y="318.3" font-size="8.6" fill="#fff" textLength="32.9" lengthAdjust="spacingAndGlyphs">디지털 핀</text><text x="1172.8" y="318.3" font-size="8.6" fill="#fff" textLength="4.6" lengthAdjust="spacingAndGlyphs">4</text><text x="1196.5" y="318.3" font-size="8.6" fill="#fff" textLength="15.2" lengthAdjust="spacingAndGlyphs">읽기</text><text x="1222.4" y="318.3" font-size="8.6" fill="#fff" textLength="38.3" lengthAdjust="spacingAndGlyphs">(으)로 설정</text><text x="1073.7" y="341.7" font-size="8.6" fill="#fff" textLength="4.6" lengthAdjust="spacingAndGlyphs">b</text><text x="1098.8" y="341.7" font-size="8.6" fill="#fff" textLength="20.2" lengthAdjust="spacingAndGlyphs">을(를)</text><text x="1129.9" y="341.7" font-size="8.6" fill="#fff" textLength="32.9" lengthAdjust="spacingAndGlyphs">디지털 핀</text><text x="1172.8" y="341.7" font-size="8.6" fill="#fff" textLength="4.6" lengthAdjust="spacingAndGlyphs">3</text><text x="1196.5" y="341.7" font-size="8.6" fill="#fff" textLength="15.2" lengthAdjust="spacingAndGlyphs">읽기</text><text x="1222.4" y="341.7" font-size="8.6" fill="#fff" textLength="38.3" lengthAdjust="spacingAndGlyphs">(으)로 설정</text><text x="1090.2" y="367.3" font-size="8.6" fill="#fff" textLength="4.6" lengthAdjust="spacingAndGlyphs">a</text><text x="1113.85" y="367.3" font-size="8.6" fill="#fff" textLength="4.6" lengthAdjust="spacingAndGlyphs">=</text><text x="1145.3" y="367.22" font-size="8.4" fill="#575e75" textLength="4.6" lengthAdjust="spacingAndGlyphs">1</text><text x="1172.6" y="367.3" font-size="8.6" fill="#fff" textLength="24.4" lengthAdjust="spacingAndGlyphs">인 경우</text><text x="1097.9" y="483.1" font-size="8.6" fill="#fff" textLength="4.6" lengthAdjust="spacingAndGlyphs">b</text><text x="1121.55" y="483.1" font-size="8.6" fill="#fff" textLength="4.6" lengthAdjust="spacingAndGlyphs">=</text><text x="1153" y="483.02" font-size="8.4" fill="#575e75" textLength="4.6" lengthAdjust="spacingAndGlyphs">1</text><text x="1180.3" y="483.1" font-size="8.6" fill="#fff" textLength="24.4" lengthAdjust="spacingAndGlyphs">인 경우</text><text x="1084.2" y="393.47" font-size="8.4" fill="#575e75" textLength="4.6" lengthAdjust="spacingAndGlyphs">1</text><text x="1101" y="393.55" font-size="8.6" fill="#fff" textLength="25" lengthAdjust="spacingAndGlyphs">초 동안</text><text x="1135.4" y="393.47" font-size="8.4" fill="#575e75" textLength="13.8" lengthAdjust="spacingAndGlyphs">120</text><text x="1159" y="393.55" font-size="8.6" fill="#fff" textLength="43" lengthAdjust="spacingAndGlyphs">의 톤으로 핀</text><text x="1211.9" y="393.55" font-size="8.6" fill="#fff" textLength="9.2" lengthAdjust="spacingAndGlyphs">11</text><text x="1240" y="393.55" font-size="8.6" fill="#fff" textLength="58" lengthAdjust="spacingAndGlyphs">에서 스피커 재생</text><text x="1057" y="417.45" font-size="8.6" fill="#fff" textLength="7" lengthAdjust="spacingAndGlyphs">핀</text><text x="1082.2" y="417.45" font-size="8.6" fill="#fff" textLength="4.6" lengthAdjust="spacingAndGlyphs">5</text><text x="1107" y="417.45" font-size="8.6" fill="#fff" textLength="20" lengthAdjust="spacingAndGlyphs">을(를)</text><text x="1136.78" y="417.45" font-size="8.6" fill="#fff" textLength="16.34" lengthAdjust="spacingAndGlyphs">낮음</text><text x="1172" y="417.45" font-size="8.6" fill="#fff" textLength="38" lengthAdjust="spacingAndGlyphs">(으)로 설정</text><text x="1057" y="441.05" font-size="8.6" fill="#fff" textLength="7" lengthAdjust="spacingAndGlyphs">핀</text><text x="1082.2" y="441.05" font-size="8.6" fill="#fff" textLength="4.6" lengthAdjust="spacingAndGlyphs">6</text><text x="1107" y="441.05" font-size="8.6" fill="#fff" textLength="20" lengthAdjust="spacingAndGlyphs">을(를)</text><text x="1136.78" y="441.05" font-size="8.6" fill="#fff" textLength="16.34" lengthAdjust="spacingAndGlyphs">높음</text><text x="1172" y="441.05" font-size="8.6" fill="#fff" textLength="38" lengthAdjust="spacingAndGlyphs">(으)로 설정</text><text x="1091.9" y="508.57" font-size="8.4" fill="#575e75" textLength="4.6" lengthAdjust="spacingAndGlyphs">1</text><text x="1108.7" y="508.65" font-size="8.6" fill="#fff" textLength="25" lengthAdjust="spacingAndGlyphs">초 동안</text><text x="1143.5" y="508.57" font-size="8.4" fill="#575e75" textLength="9.2" lengthAdjust="spacingAndGlyphs">30</text><text x="1162.9" y="508.65" font-size="8.6" fill="#fff" textLength="43" lengthAdjust="spacingAndGlyphs">의 톤으로 핀</text><text x="1215.8" y="508.65" font-size="8.6" fill="#fff" textLength="9.2" lengthAdjust="spacingAndGlyphs">11</text><text x="1243.9" y="508.65" font-size="8.6" fill="#fff" textLength="58" lengthAdjust="spacingAndGlyphs">에서 스피커 재생</text><text x="1064.7" y="532.55" font-size="8.6" fill="#fff" textLength="7" lengthAdjust="spacingAndGlyphs">핀</text><text x="1089.9" y="532.55" font-size="8.6" fill="#fff" textLength="4.6" lengthAdjust="spacingAndGlyphs">5</text><text x="1114.7" y="532.55" font-size="8.6" fill="#fff" textLength="20" lengthAdjust="spacingAndGlyphs">을(를)</text><text x="1144.48" y="532.55" font-size="8.6" fill="#fff" textLength="16.34" lengthAdjust="spacingAndGlyphs">낮음</text><text x="1179.7" y="532.55" font-size="8.6" fill="#fff" textLength="38" lengthAdjust="spacingAndGlyphs">(으)로 설정</text><text x="1064.7" y="556.15" font-size="8.6" fill="#fff" textLength="7" lengthAdjust="spacingAndGlyphs">핀</text><text x="1089.9" y="556.15" font-size="8.6" fill="#fff" textLength="4.6" lengthAdjust="spacingAndGlyphs">6</text><text x="1114.7" y="556.15" font-size="8.6" fill="#fff" textLength="20" lengthAdjust="spacingAndGlyphs">을(를)</text><text x="1144.48" y="556.15" font-size="8.6" fill="#fff" textLength="16.34" lengthAdjust="spacingAndGlyphs">높음</text><text x="1179.7" y="556.15" font-size="8.6" fill="#fff" textLength="38" lengthAdjust="spacingAndGlyphs">(으)로 설정</text><text x="1065" y="596.25" font-size="8.6" fill="#fff" textLength="6.5" lengthAdjust="spacingAndGlyphs">핀</text><text x="1089.65" y="596.25" font-size="8.6" fill="#fff" textLength="9.2" lengthAdjust="spacingAndGlyphs">11</text><text x="1118.3" y="596.25" font-size="8.6" fill="#fff" textLength="58.7" lengthAdjust="spacingAndGlyphs">에서 스피커 끄기</text><text x="1064.7" y="619.65" font-size="8.6" fill="#fff" textLength="7" lengthAdjust="spacingAndGlyphs">핀</text><text x="1089.9" y="619.65" font-size="8.6" fill="#fff" textLength="4.6" lengthAdjust="spacingAndGlyphs">5</text><text x="1114.7" y="619.65" font-size="8.6" fill="#fff" textLength="20" lengthAdjust="spacingAndGlyphs">을(를)</text><text x="1144.48" y="619.65" font-size="8.6" fill="#fff" textLength="16.34" lengthAdjust="spacingAndGlyphs">높음</text><text x="1179.7" y="619.65" font-size="8.6" fill="#fff" textLength="38" lengthAdjust="spacingAndGlyphs">(으)로 설정</text><text x="1064.7" y="643.25" font-size="8.6" fill="#fff" textLength="7" lengthAdjust="spacingAndGlyphs">핀</text><text x="1089.9" y="643.25" font-size="8.6" fill="#fff" textLength="4.6" lengthAdjust="spacingAndGlyphs">6</text><text x="1114.7" y="643.25" font-size="8.6" fill="#fff" textLength="20" lengthAdjust="spacingAndGlyphs">을(를)</text><text x="1144.48" y="643.25" font-size="8.6" fill="#fff" textLength="16.34" lengthAdjust="spacingAndGlyphs">낮음</text><text x="1179.7" y="643.25" font-size="8.6" fill="#fff" textLength="38" lengthAdjust="spacingAndGlyphs">(으)로 설정</text>
 </g>
 <g fill="none" stroke="rgb(242,48,62)" stroke-linecap="round" stroke-linejoin="round">
  <path d="M1076 380.500Q1125 375.500 1176.500 372.500" stroke-width="8" opacity=".58"></path>
  <path d="M1288 373.500L1204.500 427.500" stroke-width="9.500" opacity=".5"></path>
  <path d="M1208 385.500L1266.500 413" stroke-width="9.500" opacity=".5"></path>
  <path d="M1073.500 497.500Q1125 494 1178 492.300" stroke-width="7.500" opacity=".58"></path>
  <path d="M1138.500 518.500Q1141 535 1146.500 548L1222 499.500" stroke-width="8.500" opacity=".5"></path>
  <path d="M1180 628.500Q1178 640 1168 643L1112 645Q1094.500 644 1093.500 622Q1092.500 602 1105 597Q1125 591.500 1143 598Q1154 606 1157 625L1160 642" stroke-width="8" opacity=".5"></path>
  <g opacity=".48" stroke-width="11"><path d="M1353 533.500Q1330 541 1310 543.500T1268 549"></path><path d="M1285 530.500L1259.500 548.500L1304.500 580"></path></g>
</g>

 <rect x="1429.300" y="423" width="4" height="268" rx="2" fill="#c6c5c8"></rect>
 <rect x="1143" y="781" width="234" height="4" rx="2" fill="#c6c5c8"></rect>
 <g fill="#fdfdfe" stroke="#d4d3d8" stroke-width="1"><circle cx="1407.700" cy="649" r="11"></circle><circle cx="1407.700" cy="677.700" r="11"></circle><circle cx="1407.700" cy="707" r="11"></circle></g>
 <g fill="none" stroke="#7a7a80" stroke-width="1"><circle cx="1407.300" cy="648.500" r="4.200"></circle><path d="M1410.300 651.600l2.800 2.800M1405.300 648.500h4M1407.300 646.500v4"></path><circle cx="1407.300" cy="677.200" r="4.200"></circle><path d="M1410.300 680.300l2.800 2.800M1405.300 677.200h4"></path><path d="M1404.700 705.500h6M1404.700 708.500h6" stroke-width="1.300"></path></g>
 <rect x="1385" y="732.300" width="28" height="4" fill="#c9c7cb"></rect><rect x="1393" y="730.800" width="12" height="2.500" rx="1" fill="#c9c7cb"></rect><path d="M1387 739h23.500v25.500a2 2 0 0 1-2 2h-19.500a2 2 0 0 1-2-2z" fill="#c9c7cb"></path>
 <!-- cursor -->
 <path d="M1246.500 708.500v10.500l2.600-2.500 1.800 4 1.600-.7-1.800-3.900h3.500z" fill="#fff" stroke="#222" stroke-width=".9" stroke-linejoin="round"></path>
</svg>
<!-- serial monitor bar -->
<div class="a" style="left:825px;top:786px;width:610px;height:21px;background:#f4f3f6;border-top:1px solid #e6e5ea"></div>
<svg style="left:825px;top:786px" width="610" height="21" viewBox="825 786 610 21"><rect x="831.600" y="791.600" width="14" height="10" rx="1" fill="none" stroke="#222" stroke-width="1.300"></rect><path d="M831.600 793.800h14" stroke="#222" stroke-width="1.500"></path><rect x="840.500" y="797" width="4" height="3.500" fill="none" stroke="#222" stroke-width="1"></rect><path d="M1422.500 797h5l-2.500-2.800z" fill="#222"></path></svg>
<span class="t" style="left: 852px; top: 791px; font-size: 10px; color: rgb(51, 51, 51); transform-origin: left top; transform: scaleX(0.955);">시리얼 모니터</span>
<!--PANEL_END-->


</div></div>

<!-- ZOOM TOOLBAR -->
<div id="zbar" class="a"></div>

<!-- zoom toolbar icons -->
<svg style="left:0;top:807px" width="1600" height="52" viewBox="0 807 1600 52">
 <g fill="#b4b4b4">
  <rect x="42" y="813" width="8" height="15" rx="4"></rect>
  <path d="M38.5 823.5 a7.5 7.5 0 0 0 15 0" fill="none" stroke="#b4b4b4" stroke-width="1.6"></path>
  <rect x="45.2" y="830.5" width="1.6" height="3.5"></rect><rect x="41.5" y="833.3" width="9" height="1.6" rx=".8"></rect>
  <rect x="127" y="817" width="17" height="14" rx="3"></rect><path d="M145 822 L151 818.2 V829.8 L145 826Z"></path>
  <circle cx="566" cy="820.5" r="4.2"></circle><path d="M558 833 v-2.2 c0-3.2 3.6-5 8-5 s8 1.800 8 5 v2.2z"></path>
  <circle cx="576.500" cy="821.500" r="3.400"></circle><path d="M575 826.600 c4.200-.5 7.300 1.200 7.300 4 v2.400 h-6.500 v-2.500 c0-1.600-.3-2.900-.8-3.900z"></path>
  <path d="M668 815 h14 a3 3 0 0 1 3 3 v8 a3 3 0 0 1 -3 3 h-9.500 l-3.800 3.800 v-3.800 h-.7 a3 3 0 0 1 -3-3 v-8 a3 3 0 0 1 3-3z"></path>
  <circle cx="853" cy="824" r="7.600"></circle><circle cx="853" cy="824" r="9.600" fill="none" stroke="#b4b4b4" stroke-width="1.300"></circle>
  <circle cx="933" cy="824" r="10"></circle>
  <circle cx="1012" cy="825.500" r="8.600"></circle>
  <path d="M1021.500 812.500v6M1018.500 815.500h6" stroke="#b4b4b4" stroke-width="1.500" fill="none"></path>
 </g>
 <g fill="none" stroke="#b4b4b4" stroke-width="1.700">
  <path d="M75 826.500l3.500-3.500 3.500 3.500M172.500 826.500l3.500-3.500 3.500 3.500"></path>
  <path d="M1086 822 v-2.500 a3 3 0 0 1 3-3 h2.500 M1100.500 828 v2.500 a3 3 0 0 1-3 3 h-2.500"></path>
  <circle cx="1098" cy="819.500" r="2.300"></circle><circle cx="1088.500" cy="830.500" r="2.300"></circle>
 </g>
 <path d="M35 835.500 L58 812.500 M128.500 835.500 L151.500 812.500" stroke="#e0454e" stroke-width="1.600" fill="none"></path>
 <rect x="752" y="815" width="24" height="18" rx="3.500" fill="#23d45a"></rect>
 <path d="M764 829 v-9.500 M760.300 823.200 l3.700-3.700 3.700 3.700" stroke="#1a1a1a" stroke-width="1.800" fill="none"></path>
 <text x="586" y="826" font-size="11.500" font-weight="bold" fill="#b4b4b4" font-family="Liberation Sans, sans-serif">4</text>
 <text x="929.600" y="829" font-size="13" font-weight="bold" fill="#1a1a1a" font-family="Liberation Sans, sans-serif">?</text>
 <circle cx="1009" cy="823.500" r="1.200" fill="#1a1a1a"></circle><circle cx="1015" cy="823.500" r="1.200" fill="#1a1a1a"></circle>
 <path d="M1008 827.500 q4 3.600 8 0" stroke="#1a1a1a" stroke-width="1.400" fill="none"></path>
</svg>
<span class="zl" style="left: 14px; transform-origin: left top; transform: scaleX(0.996);">음소거 해제</span>
<span class="zl" style="left: 108px; transform-origin: left top; transform: scaleX(0.996);">비디오 시작</span>
<span class="zl" style="left: 552px; transform-origin: left top; transform: scaleX(1.021);">참가자</span>
<span class="zl" style="left: 663px; transform-origin: left top; transform: scaleX(0.978);">채팅</span>
<span class="zl" style="left: 738px; color: rgb(35, 212, 90); transform-origin: left top; transform: scaleX(1.01);">화면 공유</span>
<span class="zl" style="left: 841px; transform-origin: left top; transform: scaleX(1.021);">기록</span>
<span class="zl" style="left: 907px; transform-origin: left top; transform: scaleX(1.01);">도움 요청</span>
<span class="zl" style="left: 1001px; transform-origin: left top; transform: scaleX(1.021);">반응</span>
<span class="zl" style="left:1087px">앱</span>
<div class="a" style="left:1477px;top:820px;width:111px;height:27px;background:#1467d3;border-radius:7px"><span class="t" style="left: 13px; top: 7px; font-size: 13px; font-weight: bold; color: rgb(255, 255, 255); transform-origin: left top; transform: scaleX(0.965);">소회의실 나가기</span></div>

<!-- TASKBAR -->
<div id="taskbar" class="a">
 <div class="a" style="left:48px;top:1px;width:344px;height:40px;background:#f3f3f3;overflow:hidden">
  <svg style="left:0;top:0" width="344" height="40" viewBox="48 860 344 40">
   <circle cx="70.500" cy="876.500" r="4.800" fill="none" stroke="#222" stroke-width="1.500"></circle><path d="M67 880.200 L60.500 887" stroke="#222" stroke-width="1.600"></path>
   <!-- illustration -->
   <path d="M325 900 q8 -12 40 -13 q20 1 27 5 v8z" fill="#3fb4e0"></path>
   <path d="M340 900 q14 -8 34 -7 q12 0 18 3 v4z" fill="#5ed0ea"></path>
   <path d="M313 900 q2 -9 10 -9 q8 1 12 9z" fill="#5c9b3a"></path>
   <path d="M342 893 q0 -12 4 -19 q3 -8 8 -9 q6 2 8 10 q3 8 3 17 q-12 6 -23 1z" fill="#d9934c"></path>
   <path d="M346 874 q3 -8 8 -9 q4 1 6 7 q-4 -3 -7 0 q-2 6 -5 9 q-3 -2 -2 -7z" fill="#f0c08a"></path>
   <path d="M343 884 q4 -6 6 -2 q1 5 -3 7 q-3 -1 -3 -5z" fill="#6da544"></path>
   <path d="M373 900 q1 -14 8 -19 q6 -3 11 -2 v21z" fill="#5c9b3a"></path>
   <path d="M380 892 q2 -8 12 -8 v14 q-8 1 -12 -6z" fill="#d9934c"></path>
   <path d="M317 876 q0 -3 3 -3 q1 -3 4 -3 q4 0 4 4 q3 0 3 2.500 q0 2 -2 2 h-10 q-2 0 -2 -2.500z" fill="#c9d6e8"></path>
   <path d="M329 882 q0 -2 2 -2 q1 -2 3 -2 q3 0 3 3 q2 0 2 2 q0 1.500 -1.500 1.500 h-7 q-1.500 0 -1.500 -2.500z" fill="#d5e0ee"></path>
   <path d="M372 869 l1.300 2.700 2.700 1.300 -2.700 1.300 -1.300 2.700 -1.300 -2.700 -2.700 -1.300 2.700 -1.300z" fill="#c76ee0"></path>
   <circle cx="337" cy="869" r="1.500" fill="#f0c040"></circle><circle cx="320" cy="888" r="1.200" fill="#48c0d8"></circle>
  </svg>
  <span class="t" style="left: 41px; top: 12px; font-size: 15.5px; color: rgb(51, 51, 51); transform-origin: left top; transform: scaleX(1.025);">검색하려면 여기에 입력하십시</span>
 </div>
 <div class="a" style="left:1122px;top:1px;width:44px;height:40px;background:#3c3c3c"></div>
 <div class="a" style="left:766px;top:39px;width:36px;height:2px;background:#85bdec"></div>
 <div class="a" style="left:856px;top:39px;width:36px;height:2px;background:#85bdec"></div>
 <div class="a" style="left:991px;top:39px;width:36px;height:2px;background:#85bdec"></div>
 <div class="a" style="left:1081px;top:39px;width:36px;height:2px;background:#85bdec"></div>
 <div class="a" style="left:1122px;top:39px;width:44px;height:2px;background:#85bdec"></div>
 <div class="a" style="left:1595px;top:1px;width:1px;height:40px;background:#6a6a6a"></div>
 <svg style="left:0;top:0" width="1600" height="41" viewBox="0 859 1600 41" font-family="Liberation Sans, sans-serif">
  <!-- windows -->
  <path d="M16 874.300 l6.800 -1 v6.400 h-6.800z M23.700 873.200 l8.300 -1.200 v7.700 h-8.300z M16 880.600 h6.800 v6.400 l-6.800 -1z M23.700 880.600 h8.300 v7.700 l-8.300 -1.200z" fill="#fff"></path>
  <!-- cortana -->
  <circle cx="416" cy="880" r="6.800" fill="none" stroke="#fff" stroke-width="2"></circle>
  <!-- task view -->
  <g fill="none" stroke="#fff" stroke-width="1.300"><rect x="457.500" y="875.500" width="10" height="8"></rect><path d="M456 872.500h13M456 886.500h13M471.500 873v4M471.500 879v7"></path></g>
  <!-- store -->
  <path d="M501 876 h23 v15 a1.500 1.500 0 0 1 -1.500 1.500 h-20 a1.500 1.500 0 0 1 -1.500 -1.500z" fill="#f2f2f2"></path><path d="M507.500 876 v-4.500 a2 2 0 0 1 2 -2 h6 a2 2 0 0 1 2 2 v4.500" fill="none" stroke="#e8e8e8" stroke-width="1.600"></path>
  <rect x="508" y="880" width="4" height="4" fill="#f25022"></rect><rect x="513" y="880" width="4" height="4" fill="#7fba00"></rect><rect x="508" y="885" width="4" height="4" fill="#00a4ef"></rect><rect x="513" y="885" width="4" height="4" fill="#ffb900"></rect>
  <!-- mail -->
  <path d="M547 877 l12 -8 12 8 v13 h-24z" fill="#1b7fd0"></path><path d="M547 877.500 l12 8 12 -8 v12.500 h-24z" fill="#39a9ee"></path><path d="M547.500 878 l11.500 7.600 11.500 -7.600 v-1 h-23z" fill="#e8f4ff"></path>
  <!-- edge -->
  <circle cx="604.500" cy="880" r="12" fill="#1b8ad6"></circle><path d="M594 874 q5 -7 12 -6 q9 1 10.500 10 q-4 -6 -11 -5 q-7 1 -11.500 1z" fill="#45d07a"></path><path d="M599 881 q2 -5 8 -4 q4 1 4 4.500 q-1 3 -5 3 q2 4 7 3 q-4 5 -10 3 q-5 -3 -4 -9.500z" fill="#0c59a4"></path><circle cx="606" cy="881" r="2.800" fill="#1c1c1c"></circle>
  <!-- paint -->
  <ellipse cx="648" cy="882" rx="11" ry="8.500" fill="#e6e1d8"></ellipse><circle cx="642.500" cy="880" r="1.700" fill="#e64b3c"></circle><circle cx="646.500" cy="877" r="1.700" fill="#f2b632"></circle><circle cx="651.500" cy="877.500" r="1.700" fill="#4aa3df"></circle><circle cx="644.500" cy="885" r="1.700" fill="#4cb86a"></circle><path d="M658 870 l2 1.500 -9 14 -2.500 1 .5 -2.500z" fill="#c8823c"></path><path d="M657 869 l3.500 2.500 1 -2 -2.500 -2z" fill="#f0d9b0"></path>
  <!-- ps -->
  <rect x="683.500" y="869.500" width="20" height="18.500" fill="#0b1a66" stroke="#8aa0f5" stroke-width="1"></rect><text x="687" y="883.500" font-size="11.500" font-weight="bold" fill="#9fb4ff">Ps</text>
  <!-- notepad -->
  <path d="M731 871 l17 -1 2 17 -20 3z" fill="#cfe4ee"></path><path d="M727.500 886 l3.500 -15 17 -1 -2 17z" fill="#a6c8d8"></path><path d="M731.500 873 l15 -1 -2 13.500 -15.500 1.500z" fill="#e8f3f8"></path><path d="M727.500 886 l18.500 1 4 3 h-19z" fill="#7aa0b4"></path>
  <!-- whale -->
  <circle cx="783.500" cy="880" r="11.500" fill="#19c5bd"></circle><path d="M773 876 q6 -9 16 -6 q5 2 6 7 q-6 -2 -11 1 q-6 3 -11 -2z" fill="#17267a"></path><path d="M776 883 q6 -1 12 -6 q4 -1 7 0 q1 8 -6 13 q-3 -5 -13 -7z" fill="#e8f6f8"></path>
  <!-- chrome -->
  <circle cx="828.500" cy="880" r="11.500" fill="#e33b2e"></circle><path d="M818.500 874 a11.500 11.500 0 0 0 8 17.300 l5.500 -9.500 -8 -1z" fill="#2ea44f"></path><path d="M826.500 891.300 a11.500 11.500 0 0 0 12 -17.300 h-10 l4.500 7z" fill="#f7c21a"></path><circle cx="828.500" cy="880" r="5.300" fill="#fff"></circle><circle cx="828.500" cy="880" r="4.200" fill="#3b7cf0"></circle>
  <!-- explorer -->
  <path d="M862.500 872 h8 l2 2 h12 v14 h-22z" fill="#e9a825"></path><path d="M862.500 876 h22 v12.500 h-22z" fill="#f9d45c"></path><path d="M866.500 882 h14 v6.500 h-14z" fill="#3f97d8"></path><path d="M870.500 885 h6 v3.500 h-6z" fill="#f9d45c"></path>
  <!-- ie -->
  <text x="909" y="890" font-size="29" font-weight="bold" fill="#2cb1ee" font-family="Liberation Sans, sans-serif">e</text><path d="M909 888 q-3 -8 8 -15 q9 -5 12 -2" fill="none" stroke="#f2c318" stroke-width="1.800"></path>
  <!-- snip -->
  <ellipse cx="964" cy="879" rx="11" ry="7.500" fill="#f4eeee" stroke="#c8323c" stroke-width="2" transform="rotate(-18 964 879)"></ellipse><path d="M958 874 l12 13 M970 875 l-7 11" stroke="#3a88c8" stroke-width="1.600"></path><circle cx="971.500" cy="888.500" r="2" fill="none" stroke="#3a88c8" stroke-width="1.300"></circle><circle cx="962" cy="888" r="2" fill="none" stroke="#3a88c8" stroke-width="1.300"></circle>
  <!-- kakao -->
  <rect x="997" y="868" width="24" height="24" fill="#fae100"></rect><ellipse cx="1009" cy="878.500" rx="9" ry="6.500" fill="#3b1e1e"></ellipse><path d="M1004 883 l-1 4.500 5 -3.500z" fill="#3b1e1e"></path><text x="1002.200" y="880.800" font-size="5.600" font-weight="bold" fill="#fae100">TALK</text>
  <!-- calc -->
  <rect x="1045" y="868" width="18" height="24" rx="1.500" fill="#8a98a6"></rect><rect x="1047" y="870" width="14" height="5" fill="#3ba4e6"></rect><g fill="#e6edf3"><rect x="1047" y="877" width="4" height="3.500"></rect><rect x="1052" y="877" width="4" height="3.500"></rect><rect x="1047" y="882" width="4" height="3.500"></rect><rect x="1052" y="882" width="4" height="3.500"></rect><rect x="1047" y="887" width="4" height="3.500"></rect><rect x="1052" y="887" width="4" height="3.500"></rect></g><rect x="1057" y="877" width="4" height="13.500" fill="#2a62a8"></rect>
  <!-- polaris -->
  <rect x="1088" y="869" width="21" height="22" rx="3" fill="#e8483e"></rect><circle cx="1096" cy="877" r="3.500" fill="none" stroke="#fff" stroke-width="1.400"></circle><path d="M1096 877 v-3.500 M1096 877 h3.500 M1102 875h4 M1102 878h4 M1092 883.500h14 M1092 887h14" stroke="#fff" stroke-width="1.300" fill="none"></path>
  <!-- zoom -->
  <rect x="1132" y="868.500" width="23" height="23" rx="7" fill="#3f86f4"></rect><rect x="1137" y="876.500" width="9.500" height="7.500" rx="1.800" fill="#fff"></rect><path d="M1147.300 879 l3.200 -2.200 v7 l-3.200 -2.200z" fill="#fff"></path>
  <!-- weather -->
  <circle cx="1203.500" cy="880.500" r="8" fill="#f99b1c"></circle><path d="M1197 876 a8 8 0 0 1 10 -2.800 q-5 3 -10 2.800z" fill="#fcc24a"></path><path d="M1207 873 q4 1 4 5 q-2 -2 -5 -2z" fill="#e84a2a"></path>
  <text x="1224" y="886.500" font-size="15" fill="#fff" textLength="30" lengthAdjust="spacingAndGlyphs">25°C</text>
  <path d="M1271 883.500 l6 -6 6 6" fill="none" stroke="#fff" stroke-width="1.400"></path>
  <!-- mic -->
  <rect x="1297.500" y="872" width="6" height="10.500" rx="3" fill="#fff"></rect><path d="M1295.300 879.500 a5.200 5.200 0 0 0 10.400 0 M1300.500 885 v2.500 M1297.500 887.500 h6" fill="none" stroke="#fff" stroke-width="1.200"></path>
  <!-- cloud -->
  <path d="M1320 885.500 a3.300 3.300 0 0 1 .5 -6.500 a4.500 4.500 0 0 1 8.500 -1 a3.800 3.800 0 0 1 1 7.500z" fill="#8c8c8c"></path><path d="M1319.500 874.500 l12 12" stroke="#1c1c1c" stroke-width="2.600"></path><path d="M1319.500 874.500 l12 12" stroke="#b0b0b0" stroke-width="1.200"></path>
  <!-- network -->
  <g fill="none" stroke="#fff" stroke-width="1.200"><rect x="1344.500" y="875.500" width="12" height="8.500"></rect><path d="M1350.500 884v3M1346.500 887.500h8"></path><rect x="1341.500" y="873.500" width="4.500" height="4" fill="#1c1c1c"></rect><path d="M1343.700 877.500v7.500h2"></path></g>
  <!-- volume -->
  <g fill="none" stroke="#fff" stroke-width="1.200"><path d="M1365.500 877.500 h2.500 l3.500 -3.500 v12 l-3.500 -3.500 h-2.500z"></path><path d="M1373.500 877.300 q1.800 2.700 0 5.400 M1375.800 875.300 q3 4.700 0 9.400"></path></g><path d="M1378.200 873.500 q4 6.500 0 13" fill="none" stroke="#888" stroke-width="1.100"></path>
  <!-- meet now -->
  <g fill="none" stroke="#fff" stroke-width="1.200"><rect x="1392.500" y="876.500" width="7" height="7" rx="1.500"></rect><path d="M1400 879.500 l2.500 -1.500 v4.500 l-2.500 -1.500"></path></g><path d="M1393 874 q3.500 -2.500 7 0 M1393 886.500 q3.500 2.500 7 0" fill="none" stroke="#aaa" stroke-width="1.100"></path>
  <text x="1412.500" y="887.500" font-size="19.500" fill="#fff">A</text>
  <rect x="1441.500" y="872" width="15.500" height="16" fill="#fff"></rect>
  <text x="1442.800" y="885.300" font-size="13" font-weight="bold" fill="#111" font-family="NanumGothic, Noto Sans CJK KR, sans-serif">한</text>
  <!-- notif -->
  <path d="M1559.500 872.500 h16 v12 h-9.500 l-3.500 3.500 v-3.500 h-3z" fill="#fff"></path><path d="M1562 876.500h11M1562 879.500h11" stroke="#1c1c1c" stroke-width="1.200"></path>
  <circle cx="1574" cy="888" r="6.800" fill="#2b2b2b" stroke="#8a8a8a" stroke-width="1"></circle><text x="1571.200" y="892" font-size="10.500" font-weight="bold" fill="#fff">1</text>
 </svg>
 <span class="t" style="left: 1477px; top: 5px; font-size: 14px; color: rgb(255, 255, 255); transform-origin: left top; transform: scaleX(0.919);">오전 11:47</span>
 <span class="t" style="left: 1474px; top: 23px; font-size: 14px; color: rgb(255, 255, 255); transform-origin: left top; transform: scaleX(0.935);">2022-06-11</span>
</div>
</div>


</body></html>
